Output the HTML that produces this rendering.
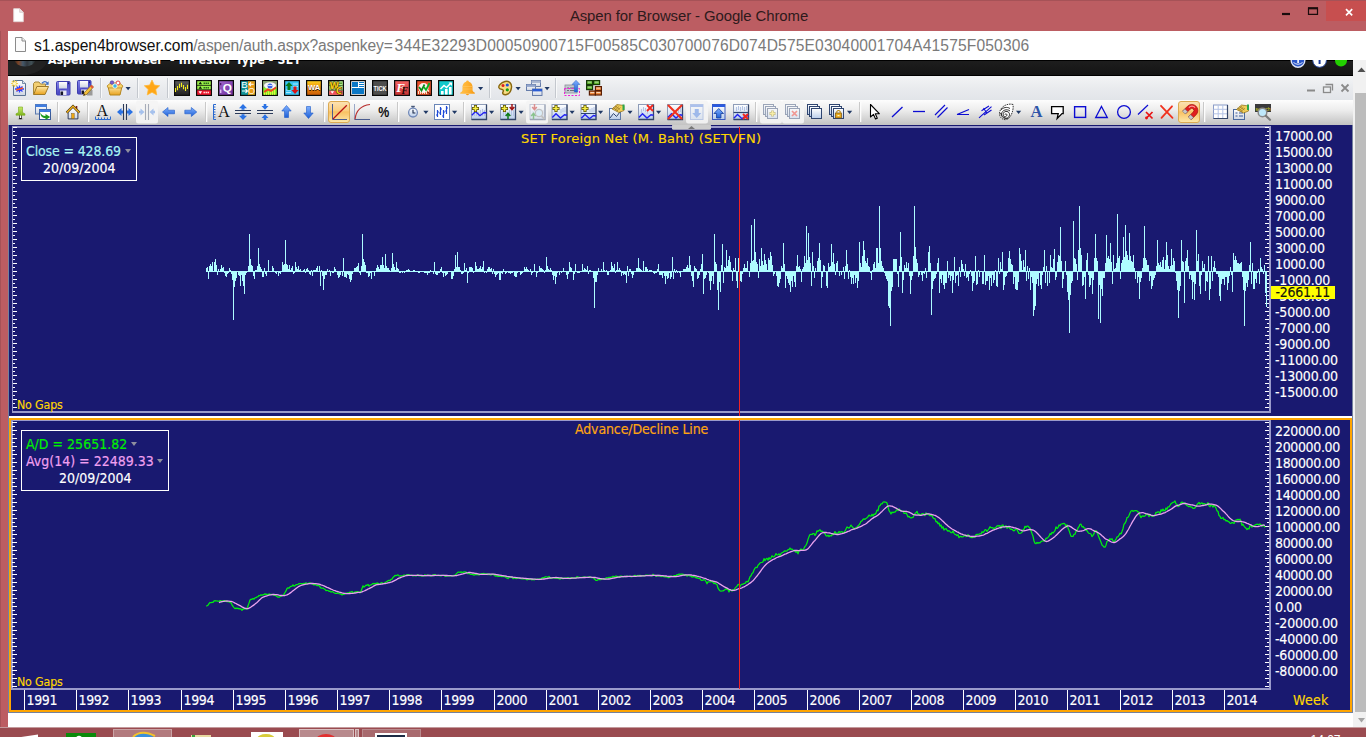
<!DOCTYPE html><html><head><meta charset="utf-8"><title>Aspen for Browser</title><style>
*{box-sizing:border-box}
html,body{margin:0;padding:0}
body{width:1366px;height:737px;overflow:hidden;background:#fff;position:relative;font-family:'Liberation Sans',sans-serif}
.abs{position:absolute}
#title{left:0;top:0;width:1366px;height:31px;background:#bc5d62;border-top:1px solid #a65257}
#title .txt{left:569px;top:7px;width:240px;text-align:center;font-size:14.9px;color:#2e1a1c;white-space:nowrap;letter-spacing:-0.08px}
#lb{left:0;top:31px;width:8px;height:697px;background:#bc5d62;border-left:1px solid #a65257}
#url{left:8px;top:31px;width:1358px;height:29px;background:#fff}
#url .u{top:6px;font-size:15.6px;white-space:nowrap;color:#7a7a7a}
#band{left:8px;top:60px;width:1345px;height:16px;background:linear-gradient(#000 0,#000 1px,#1d1d1d 1.5px,#191919 8px,#151515 14.5px,#000 15px);overflow:hidden}
#band .t{top:-7px;font:bold 12.2px 'DejaVu Sans Condensed','DejaVu Sans','Liberation Sans',sans-serif;color:#fff;white-space:pre;letter-spacing:-0.05px}
#tb1{left:8px;top:76px;width:1345px;height:24px;background:linear-gradient(#f3f4f5,#e9ebee 50%,#e2e5e9)}
#tb2{left:8px;top:100px;width:1345px;height:25px;background:linear-gradient(#fdfdfd,#ececec 42%,#d2d2d2 78%,#c3c3c3)}
#sb{left:1353px;top:60px;width:13px;height:668px;background:#f1f1f1}
#sb .th{left:2px;top:33px;width:11px;height:619px;background:#bcbcbc}
#chart{left:9px;top:125px;width:1343px;height:587px;background:#191970}
#task{left:0;top:727px;width:1366px;height:10px;background:#9a4b50;border-top:1px solid #c39a9c}
.lbl{position:absolute;font:14px 'DejaVu Sans Condensed','DejaVu Sans','Liberation Sans',sans-serif;color:#fff;white-space:nowrap;line-height:16px;height:16px;-webkit-text-stroke:0.15px}
.yl{left:1266px;letter-spacing:-0.36px}
.yr{letter-spacing:-0.36px}
.box{position:absolute;border:1px solid #fff;background:#191970}
.box div{position:absolute;white-space:nowrap;font:14px 'DejaVu Sans Condensed','DejaVu Sans','Liberation Sans',sans-serif;line-height:16px;-webkit-text-stroke:0.15px}
.tri{position:absolute;width:0;height:0;border-left:3px solid transparent;border-right:3px solid transparent;border-top:4px solid #8f8f9f}
</style></head><body><div id="title" class="abs"><div class="abs txt" id="titlet">Aspen for Browser - Google Chrome</div><svg class="abs" style="left:13px;top:7px" width="12" height="15" viewBox="0 0 12 15"><path d="M.7 .7h6l3.600 3.600v9.400h-9.600z" fill="#fff" stroke="#e3d6d6" stroke-width=".9"/><path d="M6.700 .7v3.600h3.600" fill="#ece4e4" stroke="#d4c6c6" stroke-width=".8"/></svg><div class="abs" style="left:1326px;top:0;width:40px;height:20px;background:#c74f4f"></div><svg class="abs" style="left:1270px;top:0" width="96" height="24" viewBox="0 0 96 24"><path d="M12 13h8" stroke="#1a0c0d" stroke-width="2.2"/><path d="M38.500 7.100h9v6.300h-9z" fill="none" stroke="#1a0c0d" stroke-width="1.200"/><path d="M38 7.300h10" stroke="#1a0c0d" stroke-width="2.100"/><path d="M76 8.200l6.200 6.200m0-6.200l-6.200 6.200" stroke="#fff" stroke-width="1.700" fill="none"/></svg></div><div id="lb" class="abs"></div><div id="url" class="abs"><svg class="abs" style="left:7px;top:6px" width="12" height="15" viewBox="0 0 12 15"><path d="M.5 .5h6.5l3.5 3.5v10.5h-10z" fill="#fbfbfb" stroke="#8b8b8b" stroke-width="1"/><path d="M7 .5v3.5h3.5" fill="#eee" stroke="#8b8b8b" stroke-width="1"/></svg><div class="abs u" style="left:26px;color:#111;letter-spacing:-0.05px" id="u1">s1.aspen4browser.com</div><div class="abs u" style="left:185.2px;letter-spacing:-0.15px" id="u2">/aspen/auth.aspx?aspenkey=</div><div class="abs u" style="left:386.6px;letter-spacing:0.15px" id="u3">344E32293D00050900715F00585C030700076D074D575E03040001704A41575F050306</div></div><div id="band" class="abs"><svg class="abs" style="left:0;top:0" width="1345" height="16" viewBox="0 1 1345 16"><defs><linearGradient id="lg" x1="0" y1="0" x2="1" y2="0"><stop offset="0" stop-color="#3a2a20"/><stop offset=".18" stop-color="#b85a28"/><stop offset=".4" stop-color="#5a7a98"/><stop offset=".6" stop-color="#3a4450"/><stop offset=".8" stop-color="#56707a"/><stop offset="1" stop-color="#20262a"/></linearGradient></defs><path d="M0 1h40q-4 12-22 15h-18z" fill="#222"/><ellipse cx="17" cy="1" rx="10.500" ry="6.500" fill="url(#lg)" opacity=".6"/><rect x="0" y="1" width="60" height="1" fill="#000"/><circle cx="1290" cy="1.500" r="6.800" fill="#2a55c8" stroke="#dfe6f8" stroke-width="1.400"/><path d="M1285.500 3.500q4.500 3.500 9 0" stroke="#dfe6f8" stroke-width="1" fill="none"/><rect x="1289.300" y="0" width="1.600" height="4" fill="#fff"/><circle cx="1311.600" cy="1.500" r="6.800" fill="#fff" stroke="#2a4aa0" stroke-width="1"/><rect x="1310.600" y="0" width="2" height="5" fill="#1c3a9a"/><circle cx="1333" cy="1.500" r="6" fill="#22d000"/></svg><div class="abs t" id="bandt" style="left:40px;letter-spacing:0.03px">Aspen for Browser</div><div class="abs t" id="bandt2" style="left:162px;letter-spacing:0.2px">- Investor Type - SET</div></div><div id="tb1" class="abs"></div><div id="tb2" class="abs"></div><svg class="abs" style="left:8px;top:76px" width="1345" height="49" viewBox="8 76 1345 49"><defs>
<linearGradient id="gY" x1="0" y1="0" x2="0" y2="1"><stop offset="0" stop-color="#fde9a8"/><stop offset="1" stop-color="#e9a21e"/></linearGradient>
<linearGradient id="gB" x1="0" y1="0" x2="1" y2="1"><stop offset="0" stop-color="#8c8cec"/><stop offset=".5" stop-color="#4a49c4"/><stop offset="1" stop-color="#6c6cd8"/></linearGradient>
<linearGradient id="gW" x1="0" y1="0" x2="0" y2="1"><stop offset="0" stop-color="#fff"/><stop offset="1" stop-color="#cfd6e2"/></linearGradient>
<linearGradient id="gBl" x1="0" y1="0" x2="0" y2="1"><stop offset="0" stop-color="#7fb0ff"/><stop offset="1" stop-color="#1d5fd6"/></linearGradient>
<linearGradient id="gO" x1="0" y1="0" x2="0" y2="1"><stop offset="0" stop-color="#fce2b4"/><stop offset=".42" stop-color="#fbcf82"/><stop offset=".5" stop-color="#f9c163"/><stop offset="1" stop-color="#fce9ac"/></linearGradient>
<linearGradient id="gG" x1="0" y1="0" x2="0" y2="1"><stop offset="0" stop-color="#c8ec6a"/><stop offset="1" stop-color="#7fb51c"/></linearGradient>
<linearGradient id="gCh" x1="0" y1="0" x2="0" y2="1"><stop offset="0" stop-color="#ffffff"/><stop offset="1" stop-color="#b9cdea"/></linearGradient>
<linearGradient id="gBell" x1="0" y1="0" x2="1" y2="0"><stop offset="0" stop-color="#ffc04a"/><stop offset=".5" stop-color="#ffb232"/><stop offset="1" stop-color="#f59a14"/></linearGradient>
<linearGradient id="gWA" x1="0" y1="0" x2="0" y2="1"><stop offset="0" stop-color="#ffd21e"/><stop offset=".5" stop-color="#e88a10"/><stop offset="1" stop-color="#c85a08"/></linearGradient>
<linearGradient id="gDk" x1="0" y1="0" x2="0" y2="1"><stop offset="0" stop-color="#5c5c5c"/><stop offset="1" stop-color="#1e1e1e"/></linearGradient><linearGradient id="gPu" x1="0" y1="0" x2="1" y2="1"><stop offset="0" stop-color="#a468d0"/><stop offset="1" stop-color="#6a2c98"/></linearGradient><linearGradient id="gRd" x1="0" y1="0" x2="0" y2="1"><stop offset="0" stop-color="#f26464"/><stop offset="1" stop-color="#c63030"/></linearGradient></defs><g transform="translate(11 80)"><path d="M2.500 .500h9l3 3v12h-12z" fill="url(#gW)" stroke="#5b7394"/><path d="M11.500 .500v3h3" fill="#dfe6f0" stroke="#5b7394" stroke-width=".8"/><path d="M4 9h9M8.500 5.500v7M5.500 6.500l6 5M11.500 6.500l-6 5" stroke="#2d3cff" stroke-width="1.300"/><path d="M5 10l7-2" stroke="#ff5a1e" stroke-width="1.600"/><path d="M0 3.500h7M3.500 0v7M1 1l5 5M6 1l-5 5" stroke="#f3cf4a" stroke-width="1.100"/><circle cx="3.500" cy="3.500" r="1.600" fill="#fff6c8"/></g><g transform="translate(33 80)"><path d="M.500 14.500v-11l1.500-1.500h4l1.500 2h5v2.500" fill="#f3cf72" stroke="#a8883c"/><path d="M.700 14.500l3.200-8h11.600l-3.500 8z" fill="url(#gY)" stroke="#a07a28"/><path d="M9 3.200q3-3.200 5.500 0" stroke="#3c6ec4" stroke-width="1.300" fill="none"/><path d="M15.600 1.200v3.600h-3.400z" fill="#3c6ec4"/></g><g transform="translate(56 81)"><rect x=".5" y=".5" width="13.500" height="13.500" rx="1" fill="url(#gB)" stroke="#3f3fae"/><rect x="3" y="1" width="8" height="6.500" fill="url(#gW)"/><rect x="4" y="9.500" width="6.500" height="4.500" fill="#e8e8f4"/><rect x="4.500" y="10.500" width="2.600" height="3.500" fill="#15152a"/><rect x="12" y="1.500" width="1" height="1.600" fill="#22226a"/></g><g transform="translate(77 80)"><rect x=".5" y=".5" width="13.500" height="13.500" rx="1" fill="url(#gB)" stroke="#3f3fae"/><rect x="3" y="1" width="8" height="6.500" fill="url(#gW)"/><rect x="4" y="9.500" width="6.500" height="4.500" fill="#e8e8f4"/><rect x="4.500" y="10.500" width="2.600" height="3.500" fill="#15152a"/><rect x="12" y="1.500" width="1" height="1.600" fill="#22226a"/><rect x="10" y="10" width="5.500" height="5.500" fill="#9a9a9a"/><path d="M14.500 5l2 2l-7 7.500l-3 1l1-3z" fill="#f6c23c" stroke="#8a6414" stroke-width=".7"/><path d="M14.500 5l2 2l-1.300 1.400l-2-2z" fill="#e8503a"/><path d="M6.500 15.500l.6-1.600l1.100 1.100z" fill="#111"/></g><rect x="100" y="78" width="1" height="20" fill="#c4c8ce"/><rect x="101" y="78" width="1" height="20" fill="#f8f9fa"/><g transform="translate(107 80)"><path d="M1 6.500h14l-2 8.500h-10z" fill="url(#gY)" stroke="#b4861e"/><path d="M0 6l3.500-3h9l3.500 3l-1.500 2h-13z" fill="#f7d36a" stroke="#b4861e" stroke-width=".8"/><circle cx="5" cy="2.600" r="1.800" fill="#7a5ad0" stroke="#4a3a9a" stroke-width=".6"/><circle cx="11" cy="3" r="2" fill="#fff" stroke="#e04040" stroke-width="1"/><circle cx="8" cy="6" r="2.200" fill="#39b6e8" stroke="#fff" stroke-width=".8"/></g><path d="M125.5 87h5.200l-2.600 3.300z" fill="#1f3864"/><rect x="137" y="78" width="1" height="20" fill="#c4c8ce"/><rect x="138" y="78" width="1" height="20" fill="#f8f9fa"/><g transform="translate(144 79.5)"><path d="M8 .600l2.350 5l5.300.650l-3.900 3.750l1 5.400l-4.750-2.650l-4.750 2.650l1-5.400l-3.900-3.750l5.300-.650z" fill="#ffa616" stroke="#ffba3c" stroke-width=".8" stroke-linejoin="round"/></g><rect x="167" y="78" width="1" height="20" fill="#c4c8ce"/><rect x="168" y="78" width="1" height="20" fill="#f8f9fa"/><g transform="translate(174 80)"><rect x=".6" y=".6" width="14.800" height="14.800" fill="url(#gDk)" stroke="#0a0a0a" stroke-width="1.200"/><path d="M1.500 8v4M3.500 6v4.200M5.500 3.800v4.200M7.500 2.800v4.200M9.500 4.900v4.300M11.500 6.900v4.200M13.500 4.800v4.200" stroke="#f4ee1e" stroke-width="1.100"/></g><g transform="translate(196 80)"><rect x=".6" y=".6" width="14.800" height="14.800" fill="#111" stroke="#0a0a0a" stroke-width="1.200"/><rect x="1.200" y="1.200" width="13.600" height="3.700" fill="#98f048"/><rect x="1.200" y="5.700" width="13.600" height="3.700" fill="#98f048"/><rect x="1.200" y="10.300" width="13.600" height="4.500" fill="#f01830"/><path d="M2.500 4.300l1.800-2.500l1.800 2.500zM2.500 8.800l1.800-2.500l1.800 2.500z" fill="#0a1a0a"/><path d="M2.500 11.300l1.800 2.600l1.800-2.600z" fill="#fff"/><path d="M7.500 3.300h6M7.500 7.800h6" stroke="#2a6a1a" stroke-width="1.500" stroke-dasharray="1.500 .5"/><path d="M7.500 12.600h6" stroke="#ffd8d8" stroke-width="1.500" stroke-dasharray="1.500 .5"/></g><g transform="translate(218 80)"><rect x=".6" y=".6" width="14.800" height="14.800" fill="url(#gPu)" stroke="#0a0a0a" stroke-width="1.200"/><text x="4.800" y="12.300" font-family="Liberation Sans,sans-serif" font-weight="bold" font-size="11.800" fill="#fff">Q</text><rect x="2" y="3" width="1.300" height="2.200" fill="#4a1a6a"/><rect x="2" y="9.600" width="1.400" height="3.400" fill="#e0c4f4"/></g><g transform="translate(240 80)"><rect x=".6" y=".6" width="14.800" height="14.800" fill="#10949a" stroke="#0a0a0a" stroke-width="1.200"/><rect x="8" y="1.200" width="6.800" height="13.600" fill="#e89a14"/><text x="1.300" y="8" font-family="Liberation Sans,sans-serif" font-size="9.500" fill="#fff">B</text><text x="8" y="14.400" font-family="Liberation Sans,sans-serif" font-size="9" fill="#fff4dc">O</text><path d="M13.700 4.300h-4.700m2-1.900l-2 1.900l2 1.900" stroke="#fff" stroke-width="1.100" fill="none"/><path d="M2 11h5.500m-2-1.900l2 1.900l-2 1.900" stroke="#fff" stroke-width="1.100" fill="none"/></g><g transform="translate(262 80)"><rect x=".6" y=".6" width="14.800" height="14.800" fill="#84ee2a" stroke="#0a0a0a" stroke-width="1.200"/><rect x="1.200" y="1.200" width="13.600" height="6.300" fill="#8c9c80"/><path d="M2.500 14.800v-3M4.500 14.800v-2.500M6.500 14.800v-3.500M8.500 14.800v-3M10.500 14.800v-4.500M12.500 14.800v-6" stroke="#e0f43c" stroke-width="1"/><ellipse cx="8" cy="5.600" rx="6" ry="3.300" fill="#f6f6f6"/><circle cx="8" cy="6" r="2.500" fill="#3a64e8"/><path d="M5.700 5.500h4.600" stroke="#dce6ff" stroke-width=".9"/><path d="M2.200 12l3.800-2.600l3 1.600l5-3.600" stroke="#f0401e" stroke-width="1.900" fill="none"/></g><g transform="translate(284 80)"><rect x=".6" y=".6" width="14.800" height="14.800" fill="#38c4f4" stroke="#0a0a0a" stroke-width="1.200"/><path d="M9 4h5M9 6.500h5M2 10h5M2 12.500h5" stroke="#a8e8ff" stroke-width="1.200"/><path d="M5 2l3.700 4h-2.200v4h-3v-4h-2.200z" fill="#0a7a1a"/><path d="M11 14l-3.700-4h2.200v-3.500h3v3.500h2.200z" fill="#d81414"/></g><g transform="translate(306 80)"><rect x=".6" y=".6" width="14.800" height="14.800" fill="url(#gWA)" stroke="#0a0a0a" stroke-width="1.200"/><text x="2" y="11" font-family="Liberation Sans,sans-serif" font-weight="bold" font-size="7.500" fill="#3a1a00" textLength="12.300" lengthAdjust="spacingAndGlyphs">WA</text><text x="2" y="10.200" font-family="Liberation Sans,sans-serif" font-weight="bold" font-size="7.500" fill="#fff" textLength="12.300" lengthAdjust="spacingAndGlyphs">WA</text></g><g transform="translate(328 80)"><rect x=".6" y=".6" width="14.800" height="14.800" fill="#b4ec8c" stroke="#0a0a0a" stroke-width="1.200"/><rect x="1.200" y="10.400" width="13.600" height="4.400" fill="#f04c5c"/><path d="M1.200 5.500h13.600M1.200 10.200h13.600" stroke="#3a5a2a" stroke-width=".8"/><path d="M9 3.300h5M9 7.800h5" stroke="#5a9a3a" stroke-width="1.400"/><path d="M2.500 11.300l1.800 2.400l1.800-2.400z" fill="#fff"/><text x="1.600" y="8.600" font-family="DejaVu Sans,Liberation Sans,sans-serif" font-weight="bold" font-size="8.600" fill="#f4cc14" stroke="#3a2800" stroke-width="1" paint-order="stroke">W</text><text x="8" y="14" font-family="DejaVu Sans,Liberation Sans,sans-serif" font-weight="bold" font-size="8" fill="#f4cc14" stroke="#3a2800" stroke-width="1" paint-order="stroke">C</text></g><g transform="translate(350 80)"><rect x=".6" y=".6" width="14.800" height="14.800" fill="#ffffff" stroke="#0a0a0a" stroke-width="1.200"/><g shape-rendering="crispEdges" fill="#0c78c6"><rect x="2" y="2" width="6" height="5"/><rect x="9" y="2" width="5" height="1"/><rect x="9" y="4" width="5" height="1"/><rect x="9" y="6" width="5" height="1"/><rect x="2" y="8" width="12" height="6"/></g></g><g transform="translate(372 80)"><rect x=".6" y=".6" width="14.800" height="14.800" fill="#4e4e4e" stroke="#0a0a0a" stroke-width="1.200"/><text x="1.500" y="10.600" font-family="Liberation Sans,sans-serif" font-weight="bold" font-size="7" fill="#ffffff" textLength="13" lengthAdjust="spacingAndGlyphs">TICK</text></g><g transform="translate(394 80)"><rect x=".6" y=".6" width="14.800" height="14.800" fill="url(#gRd)" stroke="#0a0a0a" stroke-width="1.200"/><text x="2.300" y="11.600" font-family="Liberation Serif,serif" font-style="italic" font-weight="bold" font-size="13" fill="#fff">F</text><text x="7.600" y="13.800" font-family="Liberation Serif,serif" font-style="italic" font-weight="bold" font-size="9.500" fill="#1a0606">F</text></g><g transform="translate(416 80)"><rect x=".6" y=".6" width="14.800" height="14.800" fill="#e8502a" stroke="#0a0a0a" stroke-width="1.200"/><path d="M2.500 14v-3M4.500 14v-4M6.500 14v-2M8.500 14v-4M10.500 14v-3M12.500 14v-4" stroke="#ffe0c0" stroke-width="1"/><circle cx="7.500" cy="8" r="5" fill="#fff" opacity=".92"/><path d="M3 7l2.500 3.500l3-6" stroke="#0a8a1a" stroke-width="1.700" fill="none"/><path d="M8 7l2 3l3.500-7" stroke="#0ab01e" stroke-width="1.700" fill="none"/><path d="M11.500 12l3 2.500" stroke="#7a1a0a" stroke-width="1.500"/></g><g transform="translate(438 80)"><rect x=".6" y=".6" width="14.800" height="14.800" fill="#12c8cc" stroke="#0a0a0a" stroke-width="1.200"/><rect x="3" y="11" width="2.600" height="3.500" fill="#fff"/><rect x="7" y="9" width="2.600" height="5.500" fill="#fff"/><rect x="11" y="7" width="2.600" height="7.500" fill="#fff"/><path d="M2.500 9l3.500-3.500l2.500 2l4.500-4.500" stroke="#fff" stroke-width="1.500" fill="none"/><path d="M10.500 2.500h3.500v3.500z" fill="#fff"/></g><g transform="translate(460 80)"><path d="M7.500 .500q1.200 0 1.400 1.200q3.600 1.300 3.600 5.300v3.300q0 1.300 2.300 2.400v1.100h-14.600v-1.100q2.300-1.100 2.300-2.400v-3.300q0-4 3.600-5.300q.200-1.200 1.400-1.200z" fill="url(#gBell)"/><path d="M2.500 6.500h10M2.500 9h10" stroke="#ffca6a" stroke-width=".8" opacity=".7"/><path d="M5.800 14q1.700 2.400 3.400 0z" fill="#f59a14"/></g><path d="M478 87h5.200l-2.600 3.300z" fill="#1f3864"/><rect x="489" y="78" width="1" height="20" fill="#c4c8ce"/><rect x="490" y="78" width="1" height="20" fill="#f8f9fa"/><g transform="translate(498 80)"><path d="M7 1.500c4-1 7 2 6.500 6c-.300 3-1.500 6-5 7c-3 .8-4.500-1-3.500-2.500c1-1.500 0-2.500-1.500-2.700c-3-.5-3.500-2.500-1.500-4.800c1.300-1.500 3-2.500 5-3z" fill="#f7dc82" stroke="#8a6810" stroke-width="1.400"/><circle cx="5" cy="5.500" r="1.500" fill="#e02020"/><circle cx="9.300" cy="5" r="1.600" fill="#2050d8"/><circle cx="9.300" cy="9.800" r="1.600" fill="#18a018"/></g><path d="M515.5 87h5.200l-2.600 3.300z" fill="#1f3864"/><g transform="translate(526 80)"><rect x="5.5" y="0.5" width="9" height="6" fill="url(#gW)" stroke="#5a72a4" stroke-width=".9"/><rect x="5.5" y="0.5" width="9" height="2.400" fill="#a9b6d0"/><rect x="0.5" y="4.5" width="9" height="6" fill="url(#gW)" stroke="#5a72a4" stroke-width=".9"/><rect x="0.5" y="4.5" width="9" height="2.400" fill="#93a6cc"/><rect x="6.5" y="9" width="9.5" height="6.5" fill="url(#gW)" stroke="#5a72a4" stroke-width=".9"/><rect x="6.5" y="9" width="9.5" height="2.400" fill="#2a5cd4"/></g><path d="M544.5 87h5.200l-2.600 3.300z" fill="#1f3864"/><rect x="555" y="78" width="1" height="20" fill="#c4c8ce"/><rect x="556" y="78" width="1" height="20" fill="#f8f9fa"/><g transform="translate(564 80)"><rect x="1" y="5" width="12" height="8" fill="#c4c8d0" stroke="#8a8e98" stroke-width=".8"/><path d="M3 8h2M3 10.500h2M6 8h5M6 10.500h5" stroke="#6a6e78" stroke-width="1"/><rect x=".5" y="8.500" width="15" height="7" fill="none" stroke="#f020d8" stroke-width="1" stroke-dasharray="2 1.500"/><path d="M12 .300l4 4.200h-2.300v7.500h-3.400v-7.500h-2.300z" fill="url(#gBl)" stroke="#2a64c0" stroke-width=".5"/></g><g transform="translate(586 80)"><rect x="0.6" y="0.6" width="6" height="4" fill="#5ab428" stroke="#163a08" stroke-width="1.200"/><path d="M1.6 2.1h4" stroke="#fff" stroke-width=".8" opacity=".8"/><rect x="7.6" y="0.6" width="6" height="4" fill="#5ab428" stroke="#163a08" stroke-width="1.200"/><path d="M8.6 2.1h4" stroke="#fff" stroke-width=".8" opacity=".8"/><rect x="0.6" y="5.6" width="6" height="4" fill="#5ab428" stroke="#163a08" stroke-width="1.200"/><path d="M1.6 7.1h4" stroke="#fff" stroke-width=".8" opacity=".8"/><rect x="9.4" y="6.6" width="6" height="4" fill="#f08a3c" stroke="#5a1e04" stroke-width="1.200"/><path d="M10.4 8.1h4" stroke="#fff" stroke-width=".8" opacity=".8"/><rect x="3.4" y="11" width="6" height="4" fill="#f08a3c" stroke="#5a1e04" stroke-width="1.200"/><path d="M4.4 12.5h4" stroke="#fff" stroke-width=".8" opacity=".8"/><rect x="9.4" y="11" width="6" height="4" fill="#f08a3c" stroke="#5a1e04" stroke-width="1.200"/><path d="M10.4 12.5h4" stroke="#fff" stroke-width=".8" opacity=".8"/></g><path d="M1307 90.500h8" stroke="#8a8a8a" stroke-width="2"/><path d="M1325.500 84.500h7v6" stroke="#8a8a8a" stroke-width="1.300" fill="none"/><rect x="1323.500" y="87" width="7" height="5.500" fill="#eceef0" stroke="#8a8a8a" stroke-width="1.300"/><path d="M1341.500 84.500l7 7m0-7l-7 7" stroke="#8a8a8a" stroke-width="1.800"/><g transform="translate(13 104)"><ellipse cx="7.500" cy="15" rx="3" ry="1" fill="#999" opacity=".5"/><rect x="6.500" y="10.500" width="2" height="4" fill="#fff" stroke="#222" stroke-width=".7"/><rect x="6.300" y="14" width="2.400" height="1.200" fill="#111"/><path d="M5.500 3h4v5.500l2.500 1.300v1.400h-9v-1.400l2.500-1.300z" fill="url(#gG)" stroke="#7aa81c" stroke-width=".6"/></g><g transform="translate(35 104)"><rect x=".5" y=".5" width="11" height="9.500" fill="url(#gW)" stroke="#5a7ab0"/><rect x=".5" y=".5" width="11" height="2.500" fill="#3f7ce0"/><rect x="4.500" y="5.500" width="11" height="10" fill="#fff" stroke="#3a5a98"/><rect x="4.500" y="5.500" width="11" height="2.500" fill="#3f7ce0"/><path d="M5.200 8.300q1.300 3.600 5.300 3.600v-2l4.700 3.200l-4.700 3v-1.900q-5 0-5.300-5.900z" fill="#1e9a1e"/></g><rect x="57" y="102" width="1" height="20" fill="#c9c9c9"/><rect x="58" y="102" width="1.300" height="20" fill="#fdfdfd"/><g transform="translate(65 104)"><g transform="translate(.9 1.100) scale(.89)"><rect x="11" y="1" width="1.800" height="4" fill="#7a1e1e"/><path d="M2.500 8v7.500h11v-7.500l-5.500-5.500z" fill="url(#gW)" stroke="#1e2a4a" stroke-width="1"/><path d="M.800 8.500l7.200-7.200l7.200 7.200" fill="none" stroke="#3a2a0a" stroke-width="2.600"/><path d="M1 8.300l7-7l7 7" fill="none" stroke="#f4b41e" stroke-width="1.500"/><rect x="6.500" y="9.500" width="2.800" height="5.500" fill="#f0aa14" stroke="#7a5208" stroke-width=".5"/></g></g><rect x="87" y="102" width="1" height="20" fill="#c9c9c9"/><rect x="88" y="102" width="1.300" height="20" fill="#fdfdfd"/><g transform="translate(95 104)"><text x="1.500" y="11.500" font-family="Liberation Serif,serif" font-size="16" fill="#111">A</text><path d="M.500 12.500v3h15v-3M3.500 13.500v2M6.500 13.500v2M9.500 13.500v2M12.500 13.500v2" stroke="#2a6ad0" stroke-width="1" fill="none"/></g><g transform="translate(117 104)"><g opacity="1"><path d="M6.500 0v16M9.500 0v16" stroke="#2a3a5a" stroke-width="1.100"/><path d="M0 8l4.500-4v2.500h1.500v3h-1.500v2.500z" fill="#2a72e4"/><path d="M16 8l-4.500-4v2.500h-1.500v3h1.500v2.500z" fill="#2a72e4"/></g></g><rect x="136" y="100.500" width="22" height="23" rx="2.500" fill="#f4f4f4" opacity=".92"/><g transform="translate(139 104)"><g opacity=".38"><path d="M6.500 0v16M9.500 0v16" stroke="#2a3a5a" stroke-width="1.100"/><path d="M5.500 8l-4-3.500v2.300h-1.500v2.400h1.500v2.300z" fill="#2a72e4"/><path d="M10.500 8l4-3.500v2.300h1.500v2.400h-1.500v2.300z" fill="#2a72e4"/></g></g><g transform="translate(162 104)"><path d="M.500 8l5.500-4.500v2.700h6.500v3.600h-6.500v2.700z" fill="url(#gBl)" stroke="#1e5ac8" stroke-width=".6"/></g><g transform="translate(184 104)"><path d="M12.800 8l-5.500-4.500v2.700h-6.500v3.600h6.500v2.700z" fill="url(#gBl)" stroke="#1e5ac8" stroke-width=".6"/></g><rect x="205" y="102" width="1" height="20" fill="#c9c9c9"/><rect x="206" y="102" width="1.300" height="20" fill="#fdfdfd"/><g transform="translate(212 104)"><path d="M4 .500h-2.500v15h2.500M1.500 3h2M1.500 5.500h2M1.500 8h2M1.500 10.500h2M1.500 13h2" stroke="#2a6ad0" stroke-width="1" fill="none"/><text x="6" y="13.300" font-family="Liberation Serif,serif" font-size="16.500" fill="#111">A</text></g><g transform="translate(235 104)"><path d="M0 6.500h16M0 9.500h16" stroke="#2a3a5a" stroke-width="1.100"/><path d="M8 0l4 4.200h-2.500v1.500h-3v-1.500h-2.500z" fill="#2a72e4"/><path d="M8 16l4-4.200h-2.500v-1.500h-3v1.500h-2.500z" fill="#2a72e4"/></g><g transform="translate(257 104)"><path d="M0 6.500h16M0 9.500h16" stroke="#2a3a5a" stroke-width="1.100"/><path d="M8 5.700l3.500-3.700h-2.200v-2h-2.600v2h-2.200z" fill="#2a72e4"/><path d="M8 10.300l3.500 3.700h-2.200v2h-2.600v-2h-2.200z" fill="#2a72e4"/></g><g transform="translate(279 104)"><path d="M7.500 1.500l4.700 5.500h-2.700v6.500h-4v-6.500h-2.700z" fill="url(#gBl)" stroke="#1e5ac8" stroke-width=".6"/></g><g transform="translate(301 104)"><path d="M7.500 14.500l4.700-5.500h-2.700v-6.500h-4v6.500h-2.700z" fill="url(#gBl)" stroke="#1e5ac8" stroke-width=".6"/></g><rect x="323" y="102" width="1" height="20" fill="#c9c9c9"/><rect x="324" y="102" width="1.300" height="20" fill="#fdfdfd"/><rect x="328.5" y="101.500" width="21" height="21" rx="2.500" fill="url(#gO)" stroke="#dcaa52"/><g transform="translate(331 104)"><path d="M1.500 0v15.500h14.500" stroke="#4a5c90" stroke-width="1" fill="none"/><path d="M2 15l13.800-13.800" stroke="#b81414" stroke-width="1.250"/></g><g transform="translate(354 104)"><path d="M.500 0v15.500" stroke="#9aa8c8" stroke-width="1" fill="none"/><path d="M.500 15.500h15.500" stroke="#4a5c90" stroke-width="1" fill="none"/><path d="M1 15.200q1.500-13 15-14.700" stroke="#b83030" stroke-width="1.250" fill="none"/></g><text x="378.300" y="117.300" font-family="Liberation Sans,sans-serif" font-weight="bold" font-size="14" fill="#111" textLength="11" lengthAdjust="spacingAndGlyphs">%</text><rect x="397" y="102" width="1" height="20" fill="#c9c9c9"/><rect x="398" y="102" width="1.300" height="20" fill="#fdfdfd"/><g transform="translate(405 104)"><rect x="6.200" y="1.800" width="3.600" height="1.300" fill="#4a5a7a"/><rect x="7.400" y="2.800" width="1.200" height="1.400" fill="#4a5a7a"/><circle cx="8" cy="8.600" r="4.400" fill="url(#gCh)" stroke="#7088b8" stroke-width="1.300"/><path d="M8 5.800v3.200h2.400" stroke="#1a2a4a" stroke-width="1.100" fill="none"/></g><path d="M423.3 110.7h5.200l-2.600 3.300z" fill="#1f3864"/><g transform="translate(434 104)"><rect x=".5" y=".5" width="15" height="15" fill="#fff" stroke="#6a86b8"/><path d="M3.500 6v7M6.500 3v8M9.500 6v8M12.500 2v8" stroke="#1c4ad8" stroke-width="1.200"/><path d="M2 11h1.500M3.500 8h1.500M5 9h1.500M6.500 5h1.500M8 12h1.500M9.500 8h1.500M11 7h1.500M12.500 4h1.500" stroke="#1c4ad8" stroke-width="1"/></g><path d="M452 110.7h5.200l-2.600 3.300z" fill="#1f3864"/><rect x="463" y="102" width="1" height="20" fill="#c9c9c9"/><rect x="464" y="102" width="1.300" height="20" fill="#fdfdfd"/><g transform="translate(471 104)"><g opacity="1"><rect x=".5" y=".5" width="15" height="15" fill="url(#gCh)" stroke="#8e9cb8"/><path d="M.500 15.500h15v-15" fill="none" stroke="#34466a" stroke-width="1.300"/><path d="M3.500 7v5M5.500 6v6M7.500 8v5M9.500 6v6M11.500 5v7M13.500 6v6" stroke="#b4c4e4" stroke-width="1"/><path transform="translate(0 0)" d="M.8 11.200l3.700-3.700l4.500 4.200l4-3.200l2.500 .5" stroke="#2222f0" stroke-width="1.400" fill="none"/><g transform="translate(0 0)"><path d="M1 4.500h7M4.500 1v7" stroke="#5a5200" stroke-width="3.100"/><path d="M1.700 4.500h5.600M4.500 1.700v5.600" stroke="#f8f048" stroke-width="1.600"/></g></g></g><path d="M489 110.7h5.200l-2.600 3.300z" fill="#1f3864"/><g transform="translate(500 104)"><g opacity="1"><rect x=".5" y=".5" width="15" height="15" fill="url(#gCh)" stroke="#8e9cb8"/><path d="M.500 15.500h15v-15" fill="none" stroke="#34466a" stroke-width="1.300"/><path d="M3.500 7v5M5.500 6v6M7.500 8v5M9.500 6v6M11.500 5v7M13.500 6v6" stroke="#b4c4e4" stroke-width="1"/><g transform="translate(0 0)"><path d="M1 4.500h7M4.500 1v7" stroke="#5a5200" stroke-width="3.100"/><path d="M1.700 4.500h5.600M4.500 1.700v5.600" stroke="#f8f048" stroke-width="1.600"/></g><path d="M12 0v5m-2.300-2l2.300 2.700l2.300-2.700" stroke="#a01414" stroke-width="1.500" fill="none"/><path d="M8 15v-5m-2.300 2l2.300-2.700l2.300 2.700" stroke="#0a7a14" stroke-width="1.500" fill="none"/></g></g><path d="M518.5 110.7h5.200l-2.600 3.300z" fill="#1f3864"/><rect x="526" y="100.500" width="22" height="23" rx="2.500" fill="#f4f4f4" opacity=".92"/><g transform="translate(529.5 104)"><g opacity=".45"><g opacity="1"><rect x=".5" y=".5" width="15" height="15" fill="url(#gCh)" stroke="#8e9cb8"/><path d="M.500 15.500h15v-15" fill="none" stroke="#34466a" stroke-width="1.300"/><path d="M3.500 7v5M5.500 6v6M7.500 8v5M9.500 6v6M11.500 5v7M13.500 6v6" stroke="#b4c4e4" stroke-width="1"/><path d="M5 0v5m-2.300-2l2.300 2.700l2.300-2.700" stroke="#c01414" stroke-width="1.500" fill="none"/><path d="M4 15v-5m-2.300 2l2.300-2.700l2.300 2.700" stroke="#0a8a14" stroke-width="1.500" fill="none"/><circle cx="9.500" cy="9" r="3.600" fill="#bfe4fa" stroke="#888" stroke-width="1.200"/><path d="M12 12l3 3" stroke="#888" stroke-width="1.800"/></g></g></g><g transform="translate(551.5 104)"><g opacity="1"><rect x=".5" y=".5" width="15" height="15" fill="url(#gCh)" stroke="#8e9cb8"/><path d="M.500 15.500h15v-15" fill="none" stroke="#34466a" stroke-width="1.300"/><path d="M9.500 5v4M11.500 4v4M13.500 3v5" stroke="#b4c4e4" stroke-width="1"/><path transform="translate(0 2.3)" d="M.8 11.200l3.700-3.700l4.500 4.200l4-3.200l2.500 .5" stroke="#2222f0" stroke-width="1.400" fill="none"/><g transform="translate(0 0)"><path d="M1 4.500h7M4.500 1v7" stroke="#5a5200" stroke-width="3.100"/><path d="M1.700 4.500h5.600M4.500 1.700v5.600" stroke="#f8f048" stroke-width="1.600"/></g></g></g><path d="M569.5 110.7h5.200l-2.600 3.300z" fill="#1f3864"/><g transform="translate(580.5 104)"><g opacity="1"><rect x=".5" y=".5" width="15" height="15" fill="url(#gCh)" stroke="#8e9cb8"/><path d="M.500 15.500h15v-15" fill="none" stroke="#34466a" stroke-width="1.300"/><path d="M9.500 5v3M11.500 4v4M13.500 3v5" stroke="#b4c4e4" stroke-width="1"/><path transform="translate(0 3)" d="M.8 11.200l3.700-3.700l4.500 4.200l4-3.200l2.500 .5" stroke="#2222f0" stroke-width="1.400" fill="none"/><g transform="translate(0 0)"><path d="M1 4.500h7M4.500 1v7" stroke="#5a5200" stroke-width="3.100"/><path d="M1.700 4.500h5.600M4.500 1.700v5.600" stroke="#f8f048" stroke-width="1.600"/></g><path d="M.500 9.500h15" stroke="#2f4570" stroke-width="1"/></g></g><path d="M598 110.7h5.200l-2.600 3.300z" fill="#1f3864"/><g transform="translate(609 104)"><rect x=".5" y="4.500" width="11" height="11" fill="url(#gCh)" stroke="#5e7aa6"/><path d="M1 14l3.500-4.500l3 3l3.500-4.500" stroke="#2f4570" stroke-width="1" fill="none"/><path d="M3 5l5-4.500l7 1v5l-5 2z" fill="#f2cf5a" stroke="#8a6a14" stroke-width=".7"/><path d="M4.500 5l4-3.500M6 6l4-3.500M7.500 7l4-3.500M4 3.500l5 3.500M6 2l5 3.500" stroke="#7a5a14" stroke-width=".5"/><rect x="13.500" y=".5" width="2" height="5.500" fill="#2aa84a"/></g><path d="M627.4 110.7h5.200l-2.600 3.300z" fill="#1f3864"/><g transform="translate(638 104)"><g opacity="1"><rect x=".5" y=".5" width="15" height="15" fill="url(#gCh)" stroke="#8e9cb8"/><path d="M.500 15.500h15v-15" fill="none" stroke="#34466a" stroke-width="1.300"/><path d="M3.500 5v4M5.500 3v4M7.500 4v4M9.500 7v3" stroke="#b4c4e4" stroke-width="1"/><path transform="translate(0 2.3)" d="M.8 11.200l3.700-3.700l4.500 4.200l4-3.200l2.500 .5" stroke="#2222f0" stroke-width="1.400" fill="none"/><g transform="translate(9 1)"><path d="M0 0l6 6m0-6l-6 6" stroke="#f0281e" stroke-width="1.900"/></g></g></g><path d="M656 110.7h5.200l-2.600 3.300z" fill="#1f3864"/><g transform="translate(667 104)"><g opacity="1"><rect x=".5" y=".5" width="15" height="15" fill="url(#gCh)" stroke="#8e9cb8"/><path d="M.500 15.500h15v-15" fill="none" stroke="#34466a" stroke-width="1.300"/><path d="M11.500 4v5M13.500 3v5" stroke="#b4c4e4" stroke-width="1"/><path transform="translate(0 2.3)" d="M.8 11.200l3.700-3.700l4.500 4.200l4-3.200l2.500 .5" stroke="#2222f0" stroke-width="1.400" fill="none"/><path d="M1.500 1.500l13 13m0-13l-13 13" stroke="#f0321e" stroke-width="2.100" stroke-linecap="round"/></g></g><rect x="686" y="100.500" width="22" height="23" rx="2.500" fill="#f4f4f4" opacity=".92"/><g transform="translate(690 104)"><g opacity=".42"><rect x=".5" y=".5" width="12.500" height="15" fill="url(#gCh)" stroke="#6a8ad0"/><rect x=".5" y=".5" width="12.500" height="2.500" fill="#4a7ae0"/><path d="M6.750 14l4.500-5h-2.500v-4h-4v4h-2.500z" fill="#2a6ae0"/></g></g><g transform="translate(712 104)"><rect x=".5" y=".5" width="12.500" height="15" fill="url(#gCh)" stroke="#3a5ac0"/><rect x=".5" y=".5" width="12.500" height="2.500" fill="#2a5ae0"/><path d="M6.750 4.500l4.800 5h-2.600v4.500h-4.400v-4.500h-2.600z" fill="url(#gBl)" stroke="#143c9a" stroke-width=".8"/></g><g transform="translate(733 104)"><g opacity="1"><rect x=".5" y=".5" width="15" height="15" fill="url(#gCh)" stroke="#8e9cb8"/><path d="M.500 15.500h15v-15" fill="none" stroke="#34466a" stroke-width="1.300"/><path d="M3.500 3v4M5.500 2v4M7.500 3v4M9.500 2v4M11.500 3v4M13.500 2v4" stroke="#b4c4e4" stroke-width="1"/><path transform="translate(0 3)" d="M.8 11.200l3.700-3.700l4.500 4.200l4-3.200l2.500 .5" stroke="#2222f0" stroke-width="1.400" fill="none"/><path d="M.500 8.500h15" stroke="#2f4570" stroke-width="1.200"/><g transform="translate(10 10)"><path d="M0 0l5 5m0-5l-5 5" stroke="#f0281e" stroke-width="1.900"/></g></g></g><rect x="755" y="102" width="1" height="20" fill="#c9c9c9"/><rect x="756" y="102" width="1.300" height="20" fill="#fdfdfd"/><rect x="760" y="100.500" width="22" height="23" rx="2.500" fill="#f4f4f4" opacity=".92"/><rect x="782" y="100.500" width="22" height="23" rx="2.500" fill="#f4f4f4" opacity=".92"/><g transform="translate(763 104)"><g opacity="0.45"><rect x="0.5" y="0.5" width="10" height="10" fill="url(#gCh)" stroke="#2f4570"/><rect x="2.5" y="2.5" width="10" height="10" fill="url(#gCh)" stroke="#2f4570"/><rect x="4.5" y="4.5" width="10" height="10" fill="url(#gCh)" stroke="#2f4570"/><g transform="translate(6.5 6.5)"><path d="M0 3h6M3 0v6" stroke="#8a7a14" stroke-width="2.800"/><path d="M.6 3h4.800M3 .6v4.800" stroke="#ffe84a" stroke-width="1.500"/></g></g></g><g transform="translate(785 104)"><g opacity="0.45"><rect x="0.5" y="0.5" width="10" height="10" fill="url(#gCh)" stroke="#2f4570"/><rect x="2.5" y="2.5" width="10" height="10" fill="url(#gCh)" stroke="#2f4570"/><rect x="4.5" y="4.5" width="10" height="10" fill="url(#gCh)" stroke="#2f4570"/><g transform="translate(7 7)"><path d="M0 0l5 5m0-5l-5 5" stroke="#f0281e" stroke-width="1.700"/></g></g></g><g transform="translate(807 104)"><g opacity="1"><rect x="0.5" y="0.5" width="10" height="10" fill="url(#gCh)" stroke="#2f4570"/><rect x="2.5" y="2.5" width="10" height="10" fill="url(#gCh)" stroke="#2f4570"/><rect x="4.5" y="4.5" width="10" height="10" fill="url(#gCh)" stroke="#2f4570"/></g></g><g transform="translate(829 104)"><g opacity="1"><rect x="0.5" y="0.5" width="10" height="10" fill="url(#gCh)" stroke="#2f4570"/><rect x="2.5" y="2.5" width="10" height="10" fill="url(#gCh)" stroke="#2f4570"/><rect x="4.5" y="4.5" width="10" height="10" fill="url(#gCh)" stroke="#2f4570"/><rect x="6.500" y="9" width="6" height="5" fill="#e8aa1e" stroke="#7a5208" stroke-width=".7"/><path d="M7.800 9v-1.500q1.700-2 3.400 0v1.500" stroke="#b88a1e" stroke-width="1.100" fill="none"/><rect x="8.500" y="11" width="2" height="1.200" fill="#fff3c0"/></g></g><path d="M847 110.7h5.200l-2.600 3.300z" fill="#1f3864"/><rect x="859" y="102" width="1" height="20" fill="#c9c9c9"/><rect x="860" y="102" width="1.300" height="20" fill="#fdfdfd"/><path d="M870.500 104.500v12.500l3-2.600l2 4.600l1.800-.8l-2-4.500h4z" fill="#fff" stroke="#000" stroke-width="1.100" stroke-linejoin="round"/><path d="M892 117l10.500-10" stroke="#0c0cd2" stroke-width="1.300"/><path d="M913 111.500h12" stroke="#0c0cd2" stroke-width="1.300"/><path d="M935 115l10-10M937.500 117.500l10-10" stroke="#0c0cd2" stroke-width="1.200"/><path d="M957 114.500h12M957 114.500l12-5" stroke="#0c0cd2" stroke-width="1.200"/><path d="M979 117.800l12.500-11.200M981.500 110.700l7.500-4.700M984 115l7.500-5M983.500 108l3.500 5.500" stroke="#0c0cd2" stroke-width="1.100"/><path d="M1013 104.500c-5-1.500-12 1.500-13.300 7.500c-1 5 3 8.500 6.800 7.500c4-1 7.500-9 6.500-15z" fill="#fff" stroke="#222" stroke-width=".9" stroke-dasharray="1.600 .8"/><g fill="none" stroke="#1a1a1a" stroke-width=".9"><path d="M1010 111c-3-2.500-8-1-8.500 3c-.4 3.500 3.500 5.500 6 4c3-2 2.500-6-.5-6.500c-3-.5-4.500 2-3.500 4c1 1.800 3.500 1.200 3.400-.6c-.1-1.400-1.800-1.400-1.900-.2"/><path d="M1001 110c2-2.500 6-3.500 9-1.500M1000.500 113c1.500 4 5 6 8 5"/></g><path d="M1016 110.7h5.200l-2.600 3.300z" fill="#1f3864"/><text x="1030.400" y="117.200" font-family="Liberation Serif,serif" font-weight="bold" font-size="16.500" fill="#2f55a8">A</text><path d="M1051.600 106.600h11.600v7h-1.200l-4.800 4.800l1-4.800h-6.600z" fill="#fff" stroke="#000" stroke-width="1.300"/><rect x="1074.600" y="106.700" width="11" height="10.700" fill="none" stroke="#0c0cd2" stroke-width="1.400"/><path d="M1101.500 106.500l5.800 11h-11.600z" fill="none" stroke="#0c0cd2" stroke-width="1.300"/><circle cx="1124" cy="112" r="6.400" fill="none" stroke="#0c0cd2" stroke-width="1.300"/><path d="M1138 114.500l10-9.500" stroke="#0c0cd2" stroke-width="1.200"/><path d="M1146 112l6.500 6.500m0-6.500l-6.500 6.500" stroke="#e81414" stroke-width="1.700"/><circle cx="1146.500" cy="118" r="1.400" fill="#e81414"/><path d="M1161 105.800l11.500 12m-.5-11.500l-10.500 11.500" stroke="#f0321e" stroke-width="1.800" stroke-linecap="round"/><rect x="1178.5" y="101.500" width="21" height="21" rx="2.500" fill="url(#gO)" stroke="#dcaa52"/><g transform="translate(1192.200 110.100) rotate(45) scale(1.1)"><path d="M-5.500 6.500v-6a5.500 5.500 0 0 1 11 0v6h-3.600v-6a1.900 1.900 0 0 0 -3.800 0v6z" fill="#e01e1e" stroke="#a01010" stroke-width=".6"/><rect x="-5.500" y="4" width="3.600" height="3" fill="#c8c8c8" stroke="#777" stroke-width=".5"/><rect x="1.900" y="4" width="3.600" height="3" fill="#c8c8c8" stroke="#777" stroke-width=".5"/><path d="M-3.800 .5a3.700 3.700 0 0 1 4-4" stroke="#ff9a9a" stroke-width="1" fill="none"/></g><rect x="1203" y="102" width="1" height="20" fill="#c9c9c9"/><rect x="1204" y="102" width="1.300" height="20" fill="#fdfdfd"/><g transform="translate(1213 104.5)"><rect x=".5" y=".5" width="14" height="13.500" fill="#fff" stroke="#8a9cc8"/><path d="M.500 4.800h14M.500 9.300h14M5.200 .500v13.500M9.800 .500v13.500" stroke="#b4c4e6" stroke-width="1"/><path d="M.500 14h14v-13.500" fill="none" stroke="#34466a" stroke-width="1.200"/></g><g transform="translate(1233 104)"><rect x=".5" y="5.500" width="11" height="10" fill="url(#gW)" stroke="#4a6aa0"/><path d="M2.500 9h2M2.500 12h2M6 9h4M6 12h4" stroke="#3a5a98" stroke-width="1.100"/><path d="M3.500 5.500l5-4.500l7 1v5l-5 2z" fill="#f2cf5a" stroke="#8a6a14" stroke-width=".7"/><path d="M5 5.500l4-3.500M6.500 6.500l4-3.500M8 7.500l4-3.500M4.500 4l5 3.500M6.500 2.500l5 3.500" stroke="#7a5a14" stroke-width=".5"/><rect x="14" y=".5" width="2" height="5.500" fill="#2aa84a"/></g><g transform="translate(1255 104)"><rect x="0" y="0" width="16" height="8" fill="#3a3a3a"/><text x=".5" y="6.500" font-family="Liberation Sans,sans-serif" font-size="5.500" fill="#d8d81e" textLength="15" lengthAdjust="spacingAndGlyphs">search</text><circle cx="7.500" cy="8.500" r="4.300" fill="#bfe8fa" stroke="#8a8a8a" stroke-width="1.500"/><path d="M10.800 11.800l4.200 4" stroke="#7a7a7a" stroke-width="2.200" stroke-linecap="round"/></g></svg><div id="sb" class="abs"><div class="abs th"></div><svg class="abs" style="left:0;top:0" width="13" height="668"><path d="M4.500 12l4-4.500l4 4.500z" fill="#505050"/><path d="M5 658l3.500 4.500l3.500-4.500z" fill="#a3a3a3"/></svg></div><div class="abs" style="left:8px;top:125px;width:1345px;height:588px;background:#74829e"></div><div id="chart" class="abs"><svg class="abs" style="left:0;top:0" width="1343" height="587" viewBox="9 125 1343 587" shape-rendering="crispEdges"><rect x="12" y="126" width="1259" height="2" fill="#9a9acb"/><rect x="12" y="411" width="1259" height="2" fill="#9a9acb"/><rect x="12" y="126" width="1" height="287" fill="#9a9acb"/><rect x="1269" y="126" width="2" height="287" fill="#9a9acb"/><path d="M13 127.5h4M13 131.5h2M13 135.5h4M13 139.5h2M13 143.5h4M13 147.5h2M13 151.5h4M13 155.5h2M13 159.5h4M13 163.5h2M13 167.5h4M13 171.5h2M13 175.5h4M13 179.5h2M13 183.5h4M13 187.5h2M13 191.5h4M13 195.5h2M13 199.5h4M13 203.5h2M13 207.5h4M13 211.5h2M13 215.5h4M13 219.5h2M13 223.5h4M13 227.5h2M13 231.5h4M13 235.5h2M13 239.5h4M13 243.5h2M13 247.5h4M13 251.5h2M13 255.5h4M13 259.5h2M13 263.5h4M13 267.5h2M13 271.5h4M13 275.5h2M13 279.5h4M13 283.5h2M13 287.5h4M13 291.5h2M13 295.5h4M13 299.5h2M13 303.5h4M13 307.5h2M13 311.5h4M13 315.5h2M13 319.5h4M13 323.5h2M13 327.5h4M13 331.5h2M13 335.5h4M13 339.5h2M13 343.5h4M13 347.5h2M13 351.5h4M13 355.5h2M13 359.5h4M13 363.5h2M13 367.5h4M13 371.5h2M13 375.5h4M13 379.5h2M13 383.5h4M13 387.5h2M13 391.5h4M13 395.5h2M13 399.5h4M13 403.5h2M13 407.5h4M1269 127.5h-4M1269 131.5h-2M1269 135.5h-4M1269 139.5h-2M1269 143.5h-4M1269 147.5h-2M1269 151.5h-4M1269 155.5h-2M1269 159.5h-4M1269 163.5h-2M1269 167.5h-4M1269 171.5h-2M1269 175.5h-4M1269 179.5h-2M1269 183.5h-4M1269 187.5h-2M1269 191.5h-4M1269 195.5h-2M1269 199.5h-4M1269 203.5h-2M1269 207.5h-4M1269 211.5h-2M1269 215.5h-4M1269 219.5h-2M1269 223.5h-4M1269 227.5h-2M1269 231.5h-4M1269 235.5h-2M1269 239.5h-4M1269 243.5h-2M1269 247.5h-4M1269 251.5h-2M1269 255.5h-4M1269 259.5h-2M1269 263.5h-4M1269 267.5h-2M1269 271.5h-4M1269 275.5h-2M1269 279.5h-4M1269 283.5h-2M1269 287.5h-4M1269 291.5h-2M1269 295.5h-4M1269 299.5h-2M1269 303.5h-4M1269 307.5h-2M1269 311.5h-4M1269 315.5h-2M1269 319.5h-4M1269 323.5h-2M1269 327.5h-4M1269 331.5h-2M1269 335.5h-4M1269 339.5h-2M1269 343.5h-4M1269 347.5h-2M1269 351.5h-4M1269 355.5h-2M1269 359.5h-4M1269 363.5h-2M1269 367.5h-4M1269 371.5h-2M1269 375.5h-4M1269 379.5h-2M1269 383.5h-4M1269 387.5h-2M1269 391.5h-4M1269 395.5h-2M1269 399.5h-4M1269 403.5h-2M1269 407.5h-4" stroke="#fff" stroke-width="1" fill="none"/><rect x="672" y="124.500" width="39" height="5.300" rx="1.500" fill="#cdcdcd" shape-rendering="auto"/><path d="M688 129l3.500-3l3.500 3z" fill="#777" shape-rendering="auto"/><rect x="9" y="416" width="1343" height="2" fill="#fff"/><rect x="9" y="418" width="1343" height="2" fill="#ffa500"/><rect x="9" y="418" width="2" height="294" fill="#ffa500"/><rect x="1350" y="418" width="2" height="294" fill="#ffa500"/><rect x="9" y="710" width="1343" height="2" fill="#ffa500"/><rect x="11" y="420" width="2" height="270" fill="#9a9acb"/><rect x="12" y="420" width="1258" height="1" fill="#9a9acb"/><rect x="1269" y="420" width="2" height="270" fill="#9a9acb"/><rect x="11" y="688" width="1260" height="2" fill="#9a9acb"/><path d="M12 422.5h5M12 426.5h3M12 430.5h5M12 434.5h3M12 438.5h5M12 442.5h3M12 446.5h5M12 450.5h3M12 454.5h5M12 458.5h3M12 462.5h5M12 466.5h3M12 470.5h5M12 474.5h3M12 478.5h5M12 482.5h3M12 486.5h5M12 490.5h3M12 494.5h5M12 498.5h3M12 502.5h5M12 506.5h3M12 510.5h5M12 514.5h3M12 518.5h5M12 522.5h3M12 526.5h5M12 530.5h3M12 534.5h5M12 538.5h3M12 542.5h5M12 546.5h3M12 550.5h5M12 554.5h3M12 558.5h5M12 562.5h3M12 566.5h5M12 570.5h3M12 574.5h5M12 578.5h3M12 582.5h5M12 586.5h3M12 590.5h5M12 594.5h3M12 598.5h5M12 602.5h3M12 606.5h5M12 610.5h3M12 614.5h5M12 618.5h3M12 622.5h5M12 626.5h3M12 630.5h5M12 634.5h3M12 638.5h5M12 642.5h3M12 646.5h5M12 650.5h3M12 654.5h5M12 658.5h3M12 662.5h5M12 666.5h3M12 670.5h5M12 674.5h3M12 678.5h5M12 682.5h3M12 686.5h5M1269 422.5h-4M1269 426.5h-2M1269 430.5h-4M1269 434.5h-2M1269 438.5h-4M1269 442.5h-2M1269 446.5h-4M1269 450.5h-2M1269 454.5h-4M1269 458.5h-2M1269 462.5h-4M1269 466.5h-2M1269 470.5h-4M1269 474.5h-2M1269 478.5h-4M1269 482.5h-2M1269 486.5h-4M1269 490.5h-2M1269 494.5h-4M1269 498.5h-2M1269 502.5h-4M1269 506.5h-2M1269 510.5h-4M1269 514.5h-2M1269 518.5h-4M1269 522.5h-2M1269 526.5h-4M1269 530.5h-2M1269 534.5h-4M1269 538.5h-2M1269 542.5h-4M1269 546.5h-2M1269 550.5h-4M1269 554.5h-2M1269 558.5h-4M1269 562.5h-2M1269 566.5h-4M1269 570.5h-2M1269 574.5h-4M1269 578.5h-2M1269 582.5h-4M1269 586.5h-2M1269 590.5h-4M1269 594.5h-2M1269 598.5h-4M1269 602.5h-2M1269 606.5h-4M1269 610.5h-2M1269 614.5h-4M1269 618.5h-2M1269 622.5h-4M1269 626.5h-2M1269 630.5h-4M1269 634.5h-2M1269 638.5h-4M1269 642.5h-2M1269 646.5h-4M1269 650.5h-2M1269 654.5h-4M1269 658.5h-2M1269 662.5h-4M1269 666.5h-2M1269 670.5h-4M1269 674.5h-2M1269 678.5h-4M1269 682.5h-2M1269 686.5h-4" stroke="#fff" stroke-width="1" fill="none"/><path d="M24.5 690v20M76.5 690v20M128.5 690v20M181.5 690v20M233.5 690v20M285.5 690v20M337.5 690v20M389.5 690v20M441.5 690v20M494.5 690v20M546.5 690v20M598.5 690v20M650.5 690v20M702.5 690v20M754.5 690v20M807.5 690v20M859.5 690v20M911.5 690v20M963.5 690v20M1015.5 690v20M1067.5 690v20M1120.5 690v20M1172.5 690v20M1224.5 690v20" stroke="#fff" stroke-width="1" fill="none"/><path d="M206.5 272v-4M207.5 272v-5M208.5 271v8M209.5 272v-6M210.5 272v-8M211.5 272v-6M212.5 272v-10M213.5 272v-1M214.5 272v-10M215.5 272v-13M216.5 272v-7M217.5 271v4M218.5 272v-3M219.5 272v-1M220.5 272v-3M221.5 272v-7M222.5 272v-4M223.5 272v-5M224.5 271v2M225.5 271v5M226.5 271v6M227.5 271v3M228.5 271v2M229.5 272v-4M230.5 272v-2M231.5 271v3M232.5 271v9M233.5 271v49M234.5 271v16M235.5 271v10M236.5 271v7M237.5 272v-1M238.5 271v4M239.5 271v5M240.5 271v15M241.5 271v4M242.5 271v10M243.5 271v15M244.5 271v23M245.5 271v4M246.5 271v2M247.5 272v-1M248.5 272v-6M249.5 272v-38M250.5 272v-13M251.5 272v-7M252.5 272v-6M253.5 271v5M254.5 271v8M255.5 272v-2M256.5 272v-2M257.5 272v-6M258.5 272v-24M259.5 272v-8M260.5 272v-5M261.5 272v-3M262.5 271v6M263.5 271v6M264.5 272v-4M265.5 271v3M266.5 271v5M267.5 272v-1M268.5 272v-12M269.5 272v-1M270.5 272v-1M271.5 272v-1M272.5 272v-6M273.5 272v-4M274.5 272v-1M275.5 271v2M276.5 271v3M277.5 272v-1M278.5 271v5M279.5 271v2M280.5 271v3M281.5 272v-1M282.5 272v-10M283.5 272v-7M284.5 272v-8M285.5 272v-32M286.5 272v-8M287.5 272v-7M288.5 272v-3M289.5 272v-7M290.5 272v-2M291.5 272v-4M292.5 272v-6M293.5 271v3M294.5 271v2M295.5 272v-10M296.5 272v-5M297.5 272v-3M298.5 272v-6M299.5 272v-2M300.5 272v-3M301.5 272v-1M302.5 272v-1M303.5 272v-2M304.5 272v-3M305.5 271v2M306.5 272v-3M307.5 272v-4M308.5 272v-2M309.5 271v3M310.5 271v4M311.5 272v-2M312.5 271v5M313.5 272v-2M314.5 272v-2M315.5 272v-2M316.5 272v-4M317.5 272v-6M318.5 272v-1M319.5 272v-6M320.5 271v15M321.5 272v-2M322.5 271v5M323.5 271v19M324.5 271v8M325.5 271v4M326.5 271v4M327.5 272v-3M328.5 272v-1M329.5 272v-2M330.5 271v5M331.5 272v-1M332.5 271v2M333.5 271v2M334.5 272v-5M335.5 272v-3M336.5 272v-1M337.5 271v4M338.5 271v7M339.5 271v6M340.5 271v4M341.5 272v-1M342.5 271v5M343.5 272v-14M344.5 271v6M345.5 271v6M346.5 271v7M347.5 271v3M348.5 271v4M349.5 271v8M350.5 271v11M351.5 271v9M352.5 271v3M353.5 272v-1M354.5 272v-4M355.5 272v-4M356.5 272v-5M357.5 272v-6M358.5 272v-9M359.5 271v2M360.5 271v4M361.5 272v-6M362.5 272v-38M363.5 272v-13M364.5 272v-10M365.5 272v-7M366.5 271v2M367.5 271v2M368.5 271v6M369.5 271v5M370.5 271v2M371.5 271v8M372.5 272v-1M373.5 272v-1M374.5 271v5M375.5 272v-1M376.5 272v-4M377.5 272v-7M378.5 272v-5M379.5 272v-3M380.5 272v-7M381.5 272v-7M382.5 272v-15M383.5 272v-7M384.5 272v-4M385.5 272v-18M386.5 272v-6M387.5 272v-4M388.5 272v-4M389.5 272v-2M390.5 272v-1M391.5 272v-4M392.5 272v-19M393.5 272v-8M394.5 272v-5M395.5 272v-2M396.5 272v-10M397.5 272v-4M398.5 272v-3M399.5 271v2M400.5 271v2M401.5 272v-1M402.5 271v2M403.5 272v-1M404.5 271v2M405.5 272v-1M406.5 272v-2M407.5 272v-2M408.5 272v-3M409.5 272v-2M410.5 272v-1M411.5 272v-1M412.5 272v-1M413.5 272v-2M414.5 272v-2M415.5 272v-1M416.5 272v-1M417.5 272v-1M418.5 271v2M419.5 271v2M420.5 272v-1M421.5 272v-1M422.5 272v-1M423.5 272v-1M424.5 271v2M425.5 271v2M426.5 271v2M427.5 271v4M428.5 271v2M429.5 271v2M430.5 272v-2M431.5 272v-1M432.5 272v-1M433.5 271v3M434.5 272v-10M435.5 271v3M436.5 271v4M437.5 271v4M438.5 271v2M439.5 271v2M440.5 272v-3M441.5 272v-5M442.5 271v2M443.5 271v6M444.5 271v2M445.5 271v5M446.5 271v4M447.5 271v3M448.5 272v-1M449.5 272v-1M450.5 272v-1M451.5 271v8M452.5 271v8M453.5 271v5M454.5 272v-3M455.5 272v-17M456.5 272v-5M457.5 272v-20M458.5 272v-5M459.5 272v-5M460.5 272v-2M461.5 271v3M462.5 271v3M463.5 271v2M464.5 272v-9M465.5 272v-2M466.5 272v-4M467.5 271v12M468.5 271v2M469.5 272v-5M470.5 272v-5M471.5 272v-5M472.5 272v-4M473.5 271v2M474.5 272v-1M475.5 272v-10M476.5 272v-6M477.5 272v-3M478.5 272v-3M479.5 272v-4M480.5 272v-6M481.5 272v-3M482.5 272v-5M483.5 272v-11M484.5 271v2M485.5 272v-1M486.5 271v2M487.5 272v-3M488.5 272v-5M489.5 272v-5M490.5 272v-3M491.5 272v-4M492.5 271v3M493.5 272v-3M494.5 271v3M495.5 271v6M496.5 271v4M497.5 271v3M498.5 271v2M499.5 271v9M500.5 271v9M501.5 271v2M502.5 271v3M503.5 272v-3M504.5 272v-1M505.5 271v3M506.5 271v2M507.5 272v-1M508.5 271v2M509.5 271v2M510.5 271v3M511.5 271v2M512.5 271v2M513.5 272v-1M514.5 271v5M515.5 271v6M516.5 271v6M517.5 271v2M518.5 272v-1M519.5 272v-1M520.5 271v4M521.5 271v3M522.5 271v2M523.5 272v-1M524.5 272v-5M525.5 272v-3M526.5 272v-5M527.5 272v-3M528.5 272v-2M529.5 272v-1M530.5 272v-3M531.5 271v4M532.5 271v2M533.5 272v-1M534.5 272v-8M535.5 272v-1M536.5 271v6M537.5 271v2M538.5 272v-1M539.5 272v-6M540.5 272v-4M541.5 272v-4M542.5 272v-3M543.5 272v-2M544.5 271v2M545.5 272v-2M546.5 272v-15M547.5 272v-6M548.5 272v-3M549.5 272v-2M550.5 272v-4M551.5 272v-2M552.5 271v4M553.5 271v9M554.5 271v5M555.5 271v13M556.5 271v6M557.5 271v2M558.5 272v-1M559.5 271v4M560.5 272v-1M561.5 271v2M562.5 272v-1M563.5 272v-4M564.5 272v-1M565.5 272v-1M566.5 271v4M567.5 271v8M568.5 271v3M569.5 272v-10M570.5 272v-5M571.5 272v-4M572.5 272v-1M573.5 271v9M574.5 271v3M575.5 272v-8M576.5 272v-1M577.5 271v2M578.5 271v2M579.5 271v2M580.5 272v-1M581.5 272v-1M582.5 272v-8M583.5 272v-2M584.5 272v-4M585.5 272v-3M586.5 272v-2M587.5 272v-6M588.5 271v3M589.5 272v-2M590.5 272v-2M591.5 272v-1M592.5 272v-1M593.5 271v7M594.5 271v37M595.5 271v11M596.5 271v11M597.5 271v4M598.5 272v-4M599.5 272v-1M600.5 272v-1M601.5 272v-3M602.5 272v-1M603.5 272v-10M604.5 272v-2M605.5 272v-1M606.5 272v-2M607.5 271v4M608.5 271v4M609.5 272v-1M610.5 272v-2M611.5 272v-10M612.5 272v-6M613.5 272v-4M614.5 272v-8M615.5 271v2M616.5 272v-2M617.5 272v-10M618.5 272v-2M619.5 272v-4M620.5 272v-2M621.5 271v5M622.5 271v2M623.5 271v4M624.5 271v3M625.5 271v4M626.5 271v12M627.5 272v-6M628.5 271v5M629.5 272v-3M630.5 272v-3M631.5 271v3M632.5 271v7M633.5 271v4M634.5 272v-1M635.5 272v-1M636.5 272v-4M637.5 272v-4M638.5 272v-14M639.5 272v-4M640.5 272v-3M641.5 272v-2M642.5 272v-1M643.5 272v-11M644.5 272v-1M645.5 272v-5M646.5 272v-5M647.5 272v-3M648.5 272v-1M649.5 272v-2M650.5 272v-2M651.5 272v-2M652.5 272v-1M653.5 271v2M654.5 271v3M655.5 271v2M656.5 271v2M657.5 272v-3M658.5 272v-8M659.5 271v4M660.5 271v4M661.5 271v4M662.5 271v7M663.5 271v2M664.5 271v5M665.5 271v13M666.5 271v5M667.5 271v8M668.5 271v7M669.5 271v2M670.5 271v8M671.5 271v6M672.5 272v-15M673.5 271v8M674.5 272v-3M675.5 271v2M676.5 272v-2M677.5 271v2M678.5 272v-1M679.5 271v2M680.5 271v6M681.5 272v-1M682.5 272v-1M683.5 272v-3M684.5 272v-3M685.5 272v-3M686.5 272v-5M687.5 272v-7M688.5 272v-4M689.5 272v-16M690.5 272v-7M691.5 271v5M692.5 271v10M693.5 271v16M694.5 272v-6M695.5 272v-4M696.5 272v-3M697.5 271v8M698.5 271v7M699.5 271v4M700.5 272v-3M701.5 272v-8M702.5 272v-18M703.5 271v23M704.5 271v8M705.5 271v7M706.5 271v4M707.5 272v-1M708.5 271v2M709.5 271v10M710.5 271v19M711.5 271v10M712.5 271v5M713.5 271v13M714.5 272v-38M715.5 272v-10M716.5 272v-8M717.5 271v19M718.5 271v39M719.5 271v11M720.5 271v21M721.5 272v-7M722.5 272v-28M723.5 271v12M724.5 272v-5M725.5 272v-4M726.5 272v-22M727.5 272v-6M728.5 272v-12M729.5 272v-16M730.5 272v-10M731.5 272v-2M732.5 271v10M733.5 272v-4M734.5 272v-2M735.5 272v-14M736.5 271v10M737.5 271v17M738.5 272v-14M739.5 271v6M740.5 271v10M741.5 271v11M742.5 271v3M743.5 272v-4M744.5 272v-8M745.5 272v-4M746.5 272v-4M747.5 272v-11M748.5 272v-1M749.5 271v6M750.5 272v-9M751.5 272v-47M752.5 272v-11M753.5 272v-12M754.5 272v-53M755.5 272v-20M756.5 272v-10M757.5 272v-8M758.5 271v7M759.5 272v-13M760.5 272v-6M761.5 272v-24M762.5 272v-11M763.5 272v-7M764.5 272v-18M765.5 272v-12M766.5 272v-8M767.5 272v-2M768.5 272v-14M769.5 272v-12M770.5 272v-20M771.5 272v-16M772.5 272v-7M773.5 271v5M774.5 271v3M775.5 272v-1M776.5 271v5M777.5 271v15M778.5 271v16M779.5 271v12M780.5 271v8M781.5 272v-6M782.5 272v-4M783.5 272v-29M784.5 272v-8M785.5 271v17M786.5 271v5M787.5 271v8M788.5 271v12M789.5 271v14M790.5 271v21M791.5 271v10M792.5 271v16M793.5 271v5M794.5 271v11M795.5 271v16M796.5 272v-6M797.5 272v-17M798.5 272v-5M799.5 272v-6M800.5 272v-3M801.5 271v11M802.5 272v-3M803.5 272v-5M804.5 272v-16M805.5 272v-9M806.5 272v-46M807.5 272v-12M808.5 272v-39M809.5 272v-15M810.5 272v-9M811.5 271v15M812.5 272v-20M813.5 272v-6M814.5 271v7M815.5 272v-4M816.5 272v-1M817.5 272v-11M818.5 272v-14M819.5 272v-29M820.5 272v-12M821.5 271v17M822.5 271v6M823.5 272v-7M824.5 272v-6M825.5 272v-1M826.5 271v15M827.5 271v17M828.5 272v-9M829.5 272v-5M830.5 272v-6M831.5 272v-28M832.5 272v-10M833.5 272v-19M834.5 272v-8M835.5 271v4M836.5 272v-9M837.5 272v-11M838.5 272v-1M839.5 271v5M840.5 272v-1M841.5 271v4M842.5 272v-1M843.5 272v-5M844.5 271v8M845.5 272v-6M846.5 272v-22M847.5 272v-8M848.5 271v8M849.5 272v-2M850.5 271v6M851.5 271v13M852.5 271v7M853.5 271v13M854.5 271v4M855.5 271v12M856.5 271v7M857.5 271v17M858.5 271v10M859.5 272v-30M860.5 272v-9M861.5 272v-5M862.5 272v-16M863.5 272v-31M864.5 272v-22M865.5 272v-11M866.5 272v-9M867.5 272v-14M868.5 272v-6M869.5 272v-5M870.5 271v2M871.5 271v9M872.5 272v-2M873.5 272v-8M874.5 272v-10M875.5 272v-4M876.5 272v-24M877.5 272v-24M878.5 272v-9M879.5 272v-66M880.5 272v-24M881.5 272v-11M882.5 272v-6M883.5 272v-4M884.5 271v2M885.5 271v5M886.5 271v8M887.5 271v10M888.5 271v35M889.5 271v37M890.5 271v55M891.5 271v20M892.5 271v16M893.5 272v-13M894.5 272v-13M895.5 272v-13M896.5 272v-13M897.5 271v3M898.5 271v16M899.5 272v-6M900.5 272v-40M901.5 272v-15M902.5 271v22M903.5 271v9M904.5 272v-7M905.5 272v-4M906.5 272v-10M907.5 272v-4M908.5 272v-9M909.5 271v5M910.5 271v23M911.5 271v9M912.5 271v5M913.5 272v-16M914.5 272v-66M915.5 272v-25M916.5 272v-13M917.5 272v-9M918.5 271v6M919.5 271v4M920.5 272v-1M921.5 271v4M922.5 271v10M923.5 271v2M924.5 271v3M925.5 272v-4M926.5 271v7M927.5 272v-1M928.5 272v-20M929.5 272v-26M930.5 272v-9M931.5 271v44M932.5 271v18M933.5 271v10M934.5 271v8M935.5 271v7M936.5 271v3M937.5 272v-9M938.5 272v-14M939.5 271v22M940.5 271v8M941.5 271v12M942.5 271v4M943.5 271v14M944.5 271v18M945.5 271v12M946.5 271v12M947.5 272v-11M948.5 271v7M949.5 271v4M950.5 271v10M951.5 271v5M952.5 271v22M953.5 271v9M954.5 272v-15M955.5 271v12M956.5 271v5M957.5 271v4M958.5 271v15M959.5 272v-5M960.5 271v6M961.5 272v-12M962.5 272v-8M963.5 272v-3M964.5 271v5M965.5 272v-8M966.5 271v7M967.5 271v6M968.5 271v10M969.5 271v3M970.5 272v-2M971.5 271v5M972.5 271v20M973.5 271v12M974.5 271v10M975.5 272v-16M976.5 271v14M977.5 271v13M978.5 272v-2M979.5 271v6M980.5 272v-1M981.5 272v-1M982.5 271v13M983.5 271v13M984.5 272v-17M985.5 271v14M986.5 271v10M987.5 271v10M988.5 271v5M989.5 271v19M990.5 271v7M991.5 271v15M992.5 271v4M993.5 271v12M994.5 271v9M995.5 272v-2M996.5 271v15M997.5 271v16M998.5 272v-14M999.5 271v3M1000.5 272v-10M1001.5 272v-3M1002.5 272v-20M1003.5 271v19M1004.5 271v14M1005.5 271v6M1006.5 271v5M1007.5 271v2M1008.5 272v-14M1009.5 272v-21M1010.5 272v-13M1011.5 272v-8M1012.5 272v-7M1013.5 271v13M1014.5 271v6M1015.5 271v18M1016.5 271v19M1017.5 271v19M1018.5 271v11M1019.5 272v-24M1020.5 272v-18M1021.5 272v-11M1022.5 272v-2M1023.5 272v-12M1024.5 272v-5M1025.5 272v-22M1026.5 271v10M1027.5 272v-6M1028.5 271v8M1029.5 272v-4M1030.5 271v19M1031.5 271v6M1032.5 271v12M1033.5 271v45M1034.5 271v39M1035.5 271v35M1036.5 271v13M1037.5 271v8M1038.5 271v15M1039.5 271v2M1040.5 271v14M1041.5 271v18M1042.5 271v4M1043.5 272v-5M1044.5 272v-22M1045.5 271v12M1046.5 272v-6M1047.5 271v15M1048.5 272v-1M1049.5 271v12M1050.5 272v-17M1051.5 272v-5M1052.5 272v-4M1053.5 272v-13M1054.5 272v-23M1055.5 271v9M1056.5 271v6M1057.5 272v-10M1058.5 272v-17M1059.5 272v-16M1060.5 272v-45M1061.5 272v-11M1062.5 271v17M1063.5 271v8M1064.5 272v-1M1065.5 272v-11M1066.5 271v4M1067.5 271v21M1068.5 271v29M1069.5 271v62M1070.5 271v24M1071.5 271v12M1072.5 271v10M1073.5 272v-51M1074.5 272v-14M1075.5 272v-13M1076.5 272v-8M1077.5 271v9M1078.5 272v-22M1079.5 272v-66M1080.5 272v-24M1081.5 272v-17M1082.5 271v15M1083.5 271v14M1084.5 271v6M1085.5 271v28M1086.5 272v-12M1087.5 272v-19M1088.5 271v4M1089.5 271v16M1090.5 271v14M1091.5 271v7M1092.5 271v23M1093.5 271v9M1094.5 272v-14M1095.5 272v-38M1096.5 272v-14M1097.5 272v-11M1098.5 271v48M1099.5 271v14M1100.5 271v52M1101.5 271v18M1102.5 271v25M1103.5 271v7M1104.5 271v7M1105.5 272v-9M1106.5 272v-37M1107.5 272v-14M1108.5 272v-16M1109.5 272v-13M1110.5 272v-29M1111.5 272v-10M1112.5 271v13M1113.5 272v-17M1114.5 272v-3M1115.5 272v-4M1116.5 272v-9M1117.5 272v-58M1118.5 272v-14M1119.5 272v-16M1120.5 271v8M1121.5 272v-9M1122.5 272v-12M1123.5 272v-35M1124.5 272v-15M1125.5 272v-47M1126.5 272v-21M1127.5 272v-17M1128.5 272v-12M1129.5 272v-39M1130.5 272v-16M1131.5 272v-11M1132.5 272v-10M1133.5 272v-17M1134.5 272v-4M1135.5 271v8M1136.5 272v-1M1137.5 271v12M1138.5 271v6M1139.5 271v28M1140.5 271v11M1141.5 271v7M1142.5 272v-4M1143.5 272v-14M1144.5 272v-46M1145.5 272v-14M1146.5 272v-12M1147.5 272v-7M1148.5 272v-7M1149.5 271v10M1150.5 271v5M1151.5 271v18M1152.5 271v15M1153.5 271v9M1154.5 271v7M1155.5 271v4M1156.5 272v-6M1157.5 272v-32M1158.5 272v-9M1159.5 272v-7M1160.5 272v-10M1161.5 272v-5M1162.5 272v-12M1163.5 272v-15M1164.5 272v-3M1165.5 272v-12M1166.5 272v-30M1167.5 272v-17M1168.5 272v-6M1169.5 272v-3M1170.5 272v-6M1171.5 272v-23M1172.5 272v-7M1173.5 272v-14M1174.5 272v-11M1175.5 271v2M1176.5 271v10M1177.5 271v19M1178.5 271v47M1179.5 271v20M1180.5 271v15M1181.5 272v-32M1182.5 272v-11M1183.5 272v-10M1184.5 271v32M1185.5 272v-11M1186.5 272v-14M1187.5 272v-22M1188.5 272v-6M1189.5 271v8M1190.5 271v4M1191.5 271v9M1192.5 271v28M1193.5 271v11M1194.5 271v29M1195.5 271v13M1196.5 272v-42M1197.5 272v-11M1198.5 272v-18M1199.5 271v15M1200.5 271v23M1201.5 271v4M1202.5 272v-11M1203.5 272v-4M1204.5 272v-8M1205.5 271v20M1206.5 271v10M1207.5 271v11M1208.5 272v-16M1209.5 271v29M1210.5 271v18M1211.5 272v-16M1212.5 271v10M1213.5 272v-5M1214.5 272v-11M1215.5 272v-4M1216.5 271v3M1217.5 271v3M1218.5 271v6M1219.5 271v25M1220.5 271v30M1221.5 271v13M1222.5 271v8M1223.5 271v8M1224.5 271v14M1225.5 271v6M1226.5 271v6M1227.5 271v19M1228.5 271v12M1229.5 271v5M1230.5 272v-5M1231.5 271v4M1232.5 271v21M1233.5 272v-19M1234.5 272v-12M1235.5 272v-16M1236.5 272v-12M1237.5 272v-9M1238.5 272v-9M1239.5 272v-8M1240.5 272v-9M1241.5 272v-10M1242.5 271v6M1243.5 271v19M1244.5 271v55M1245.5 271v20M1246.5 271v12M1247.5 271v16M1248.5 271v9M1249.5 272v-7M1250.5 272v-30M1251.5 271v13M1252.5 272v-9M1253.5 271v18M1254.5 271v18M1255.5 271v8M1256.5 271v12M1257.5 271v2M1258.5 272v-3M1259.5 271v13M1260.5 272v-14M1261.5 272v-5M1262.5 272v-3M1263.5 271v3M1264.5 272v-7M1265.5 271v22M1266.5 271v36" stroke="#aefcff" stroke-width="1" fill="none"/><rect x="206" y="271" width="1061" height="1" fill="#aefcff"/><polyline shape-rendering="auto" fill="none" stroke="#00ee10" stroke-width="1.25" stroke-linejoin="round" points="206,606.0 207,605.8 208,605.2 209,603.7 210,602.5 211,602.6 212,602.4 213,602.3 214,601.0 215,600.6 216,601.0 217,600.8 218,601.3 219,601.1 220,600.7 221,600.7 222,601.9 223,600.8 224,600.7 225,600.7 226,601.4 227,601.7 228,601.7 229,602.0 230,602.3 231,602.7 232,604.8 233,606.4 234,607.6 235,608.7 236,608.0 237,608.6 238,608.2 239,608.9 240,608.7 241,609.1 242,610.3 243,608.9 244,609.2 245,608.3 246,608.7 247,609.1 248,605.8 249,603.1 250,600.0 251,599.2 252,599.4 253,598.5 254,599.1 255,597.8 256,597.7 257,596.9 258,596.7 259,595.5 260,595.6 261,594.8 262,595.2 263,594.8 264,594.4 265,593.9 266,594.3 267,594.2 268,594.7 269,593.9 270,594.4 271,594.4 272,594.3 273,594.8 274,595.2 275,595.4 276,595.7 277,596.5 278,597.2 279,597.2 280,596.6 281,596.2 282,595.7 283,595.3 284,594.3 285,592.5 286,590.9 287,588.6 288,587.8 289,588.1 290,586.8 291,586.4 292,586.1 293,585.0 294,586.2 295,585.6 296,584.7 297,584.7 298,584.2 299,583.6 300,583.7 301,583.6 302,583.9 303,583.6 304,583.3 305,583.7 306,582.8 307,583.3 308,583.6 309,583.2 310,582.8 311,583.3 312,583.9 313,584.2 314,585.0 315,584.3 316,585.0 317,585.6 318,585.7 319,585.2 320,587.0 321,588.2 322,588.2 323,588.1 324,588.8 325,589.4 326,590.7 327,590.3 328,590.5 329,591.4 330,591.1 331,592.2 332,591.5 333,591.9 334,592.7 335,593.3 336,593.3 337,593.4 338,592.8 339,593.6 340,593.9 341,594.2 342,594.9 343,594.4 344,594.5 345,593.8 346,593.2 347,593.0 348,592.9 349,592.8 350,592.1 351,591.9 352,591.5 353,592.6 354,592.6 355,591.9 356,591.8 357,591.5 358,592.1 359,592.1 360,592.9 361,591.4 362,588.5 363,585.8 364,587.0 365,586.2 366,585.1 367,585.4 368,584.4 369,586.2 370,585.1 371,584.8 372,584.3 373,583.4 374,584.0 375,583.3 376,584.1 377,582.9 378,583.3 379,584.1 380,584.2 381,582.9 382,582.7 383,583.5 384,583.4 385,582.4 386,582.0 387,581.4 388,580.7 389,580.3 390,580.5 391,579.4 392,579.1 393,577.4 394,576.6 395,575.4 396,575.7 397,575.2 398,574.9 399,575.8 400,576.1 401,575.8 402,575.9 403,575.5 404,575.0 405,575.3 406,575.1 407,574.8 408,574.6 409,574.7 410,575.3 411,575.4 412,575.2 413,576.0 414,575.5 415,575.7 416,576.0 417,575.2 418,574.8 419,575.9 420,575.3 421,576.1 422,575.7 423,576.0 424,575.9 425,574.7 426,575.8 427,575.2 428,575.2 429,575.3 430,575.8 431,575.8 432,575.8 433,574.8 434,575.2 435,574.4 436,575.4 437,575.7 438,575.2 439,575.6 440,575.7 441,576.0 442,575.3 443,575.3 444,575.4 445,576.4 446,576.2 447,575.7 448,575.9 449,575.9 450,576.0 451,575.8 452,575.8 453,575.5 454,575.3 455,575.4 456,574.1 457,573.1 458,572.1 459,572.2 460,572.3 461,571.9 462,572.3 463,572.3 464,571.9 465,571.9 466,572.2 467,572.6 468,573.8 469,572.9 470,574.1 471,574.4 472,574.4 473,574.7 474,575.1 475,574.7 476,574.7 477,574.5 478,574.7 479,575.0 480,574.4 481,573.9 482,573.7 483,573.6 484,573.4 485,574.2 486,573.9 487,573.8 488,574.7 489,574.0 490,574.8 491,575.0 492,574.2 493,574.4 494,574.8 495,575.8 496,576.2 497,575.4 498,576.5 499,576.1 500,576.4 501,576.4 502,576.6 503,576.1 504,576.6 505,576.6 506,577.4 507,578.1 508,578.5 509,577.4 510,576.9 511,577.5 512,577.4 513,578.7 514,578.2 515,577.8 516,578.6 517,578.5 518,577.7 519,578.3 520,578.5 521,578.7 522,578.8 523,578.7 524,579.0 525,578.8 526,578.7 527,579.8 528,579.4 529,579.5 530,578.8 531,579.4 532,579.9 533,579.1 534,579.9 535,579.2 536,579.5 537,579.2 538,579.2 539,579.6 540,578.8 541,579.3 542,578.0 543,577.6 544,577.9 545,576.9 546,576.8 547,577.0 548,577.3 549,576.4 550,577.5 551,578.3 552,578.2 553,577.9 554,577.9 555,578.1 556,577.9 557,578.4 558,578.5 559,578.6 560,579.1 561,578.5 562,577.9 563,578.9 564,578.0 565,578.1 566,578.2 567,578.1 568,577.7 569,578.0 570,578.9 571,577.7 572,577.8 573,578.2 574,578.0 575,577.9 576,577.9 577,576.7 578,577.0 579,577.3 580,577.4 581,577.7 582,577.4 583,577.1 584,577.2 585,577.1 586,577.3 587,577.5 588,577.1 589,576.9 590,576.9 591,577.6 592,577.7 593,577.6 594,578.5 595,579.6 596,580.4 597,580.5 598,579.6 599,579.7 600,579.3 601,579.6 602,578.9 603,578.9 604,578.9 605,579.0 606,578.0 607,577.7 608,578.2 609,577.3 610,577.7 611,577.1 612,577.1 613,576.2 614,577.1 615,576.4 616,576.0 617,577.0 618,576.3 619,577.4 620,576.2 621,576.0 622,576.2 623,576.9 624,576.2 625,576.5 626,576.5 627,576.0 628,576.5 629,576.3 630,576.0 631,576.8 632,576.6 633,576.3 634,575.9 635,575.3 636,576.3 637,576.0 638,575.3 639,575.8 640,575.2 641,575.7 642,575.8 643,575.8 644,575.7 645,575.6 646,575.1 647,575.3 648,575.2 649,575.3 650,575.5 651,575.5 652,575.9 653,574.2 654,575.5 655,575.3 656,576.4 657,576.0 658,575.1 659,576.0 660,575.8 661,576.6 662,576.0 663,576.5 664,576.7 665,576.9 666,576.9 667,576.6 668,577.6 669,577.6 670,576.9 671,576.2 672,576.4 673,576.3 674,575.7 675,575.5 676,575.9 677,574.7 678,574.8 679,574.1 680,574.4 681,574.2 682,574.0 683,574.1 684,575.4 685,574.8 686,575.0 687,576.2 688,575.5 689,575.1 690,576.2 691,575.9 692,577.2 693,576.4 694,576.9 695,576.8 696,577.8 697,577.6 698,578.3 699,578.5 700,578.5 701,580.1 702,580.5 703,580.1 704,579.7 705,580.0 706,581.5 707,583.8 708,581.8 709,581.8 710,581.9 711,581.6 712,581.7 713,582.3 714,583.7 715,583.0 716,584.0 717,584.6 718,588.1 719,589.8 720,590.7 721,591.2 722,591.0 723,590.9 724,590.2 725,589.6 726,588.8 727,589.5 728,589.7 729,591.9 730,589.5 731,590.0 732,591.2 733,589.7 734,590.6 735,588.2 736,587.1 737,586.1 738,584.6 739,584.3 740,586.5 741,584.8 742,584.3 743,584.2 744,583.5 745,583.4 746,581.9 747,581.4 748,582.0 749,579.5 750,576.8 751,575.8 752,573.5 753,572.8 754,570.0 755,568.1 756,567.2 757,567.7 758,565.2 759,564.3 760,563.0 761,562.5 762,562.3 763,561.9 764,558.6 765,560.6 766,559.0 767,558.3 768,560.2 769,557.7 770,559.1 771,557.8 772,555.8 773,556.8 774,556.8 775,555.7 776,553.6 777,555.0 778,554.8 779,553.8 780,555.7 781,553.4 782,552.8 783,552.3 784,551.4 785,550.8 786,551.1 787,550.8 788,549.7 789,549.6 790,548.0 791,549.4 792,549.0 793,550.5 794,550.2 795,551.2 796,552.4 797,551.4 798,553.8 799,550.9 800,550.2 801,548.9 802,550.4 803,549.7 804,548.3 805,546.4 806,545.3 807,543.1 808,539.4 809,536.6 810,534.5 811,534.4 812,534.5 813,533.5 814,533.5 815,535.4 816,533.9 817,530.8 818,531.4 819,530.5 820,529.7 821,531.5 822,531.1 823,531.9 824,532.7 825,533.7 826,535.7 827,536.1 828,535.1 829,536.6 830,535.5 831,536.0 832,534.7 833,534.8 834,533.6 835,531.6 836,533.5 837,533.2 838,533.2 839,531.5 840,532.6 841,531.8 842,531.7 843,532.5 844,532.4 845,531.2 846,529.0 847,526.9 848,527.6 849,528.1 850,526.8 851,525.1 852,526.5 853,527.7 854,528.9 855,528.3 856,527.5 857,527.2 858,525.9 859,525.0 860,523.4 861,521.3 862,520.9 863,519.4 864,518.9 865,519.4 866,518.4 867,517.7 868,516.7 869,515.1 870,515.9 871,516.1 872,514.3 873,515.9 874,514.1 875,514.3 876,513.0 877,510.1 878,510.8 879,506.0 880,505.7 881,503.8 882,503.9 883,502.3 884,501.8 885,502.1 886,502.2 887,503.0 888,507.0 889,510.6 890,512.0 891,514.0 892,512.1 893,512.7 894,512.0 895,512.0 896,511.0 897,509.4 898,510.7 899,508.8 900,510.1 901,510.9 902,511.0 903,510.9 904,513.3 905,513.3 906,512.9 907,514.6 908,516.9 909,516.3 910,517.5 911,518.0 912,517.7 913,517.4 914,515.3 915,513.5 916,512.8 917,511.3 918,514.3 919,514.1 920,514.5 921,514.9 922,513.6 923,513.5 924,514.4 925,515.6 926,512.8 927,514.1 928,513.8 929,514.9 930,515.7 931,515.3 932,515.6 933,517.8 934,518.6 935,518.6 936,521.8 937,521.6 938,523.7 939,523.0 940,526.1 941,525.0 942,528.2 943,526.8 944,530.0 945,529.0 946,528.6 947,530.2 948,531.2 949,530.6 950,531.6 951,532.7 952,532.7 953,530.7 954,533.3 955,534.4 956,534.7 957,535.6 958,534.6 959,537.7 960,536.6 961,536.4 962,537.0 963,536.8 964,535.9 965,535.2 966,536.5 967,536.3 968,534.6 969,535.6 970,537.3 971,537.3 972,537.7 973,537.4 974,536.5 975,537.1 976,534.7 977,534.4 978,534.4 979,534.2 980,533.8 981,533.9 982,531.7 983,532.6 984,531.5 985,529.7 986,529.9 987,531.4 988,530.0 989,528.6 990,526.7 991,527.8 992,527.5 993,527.9 994,529.5 995,527.9 996,527.3 997,526.0 998,525.5 999,526.1 1000,525.6 1001,528.3 1002,525.2 1003,525.0 1004,527.0 1005,526.5 1006,525.8 1007,528.4 1008,527.4 1009,527.0 1010,528.8 1011,529.4 1012,529.1 1013,530.4 1014,530.9 1015,529.9 1016,529.3 1017,529.4 1018,531.7 1019,533.3 1020,533.5 1021,533.0 1022,532.3 1023,529.6 1024,529.4 1025,526.3 1026,527.3 1027,526.2 1028,526.1 1029,527.3 1030,528.3 1031,530.8 1032,533.6 1033,536.2 1034,541.0 1035,543.2 1036,543.7 1037,542.4 1038,543.3 1039,542.6 1040,542.8 1041,541.7 1042,541.0 1043,540.8 1044,541.1 1045,540.7 1046,538.2 1047,538.3 1048,537.4 1049,536.2 1050,533.7 1051,534.5 1052,532.3 1053,533.1 1054,531.8 1055,530.6 1056,526.8 1057,528.5 1058,527.6 1059,524.9 1060,525.8 1061,524.1 1062,523.9 1063,523.6 1064,523.4 1065,524.0 1066,527.0 1067,524.7 1068,527.9 1069,530.4 1070,533.4 1071,536.4 1072,536.4 1073,536.5 1074,534.3 1075,534.2 1076,531.3 1077,530.9 1078,528.0 1079,526.7 1080,524.3 1081,524.1 1082,526.9 1083,526.5 1084,527.8 1085,528.2 1086,530.2 1087,530.7 1088,532.3 1089,533.4 1090,533.5 1091,534.0 1092,536.6 1093,535.4 1094,533.6 1095,530.6 1096,530.7 1097,532.1 1098,534.7 1099,537.6 1100,539.7 1101,542.3 1102,545.0 1103,545.9 1104,547.2 1105,547.1 1106,545.2 1107,541.4 1108,540.7 1109,540.0 1110,538.7 1111,539.4 1112,538.7 1113,540.9 1114,542.0 1115,540.7 1116,539.1 1117,536.9 1118,536.8 1119,535.1 1120,533.3 1121,533.9 1122,531.4 1123,528.7 1124,524.2 1125,523.2 1126,521.4 1127,517.7 1128,517.3 1129,515.6 1130,513.1 1131,511.0 1132,510.5 1133,511.3 1134,510.9 1135,510.7 1136,510.6 1137,510.9 1138,512.0 1139,512.0 1140,515.4 1141,517.7 1142,516.1 1143,515.9 1144,516.5 1145,516.0 1146,514.3 1147,514.6 1148,514.2 1149,516.7 1150,514.3 1151,515.5 1152,516.3 1153,516.2 1154,515.4 1155,515.2 1156,512.3 1157,512.6 1158,511.8 1159,511.8 1160,513.8 1161,509.7 1162,511.1 1163,509.1 1164,510.9 1165,510.4 1166,508.0 1167,509.3 1168,506.8 1169,507.0 1170,505.3 1171,503.7 1172,503.0 1173,502.4 1174,502.2 1175,500.9 1176,504.0 1177,504.3 1178,506.6 1179,506.1 1180,504.6 1181,502.7 1182,502.0 1183,503.0 1184,502.9 1185,503.4 1186,504.5 1187,505.7 1188,506.0 1189,506.8 1190,506.2 1191,507.1 1192,507.2 1193,508.4 1194,508.4 1195,507.9 1196,506.3 1197,504.7 1198,503.5 1199,502.4 1200,504.3 1201,503.2 1202,502.9 1203,504.2 1204,503.5 1205,503.8 1206,505.1 1207,503.8 1208,502.7 1209,505.9 1210,506.8 1211,504.7 1212,505.6 1213,507.1 1214,505.1 1215,506.5 1216,508.1 1217,510.9 1218,511.3 1219,515.5 1220,516.4 1221,518.4 1222,518.4 1223,517.5 1224,519.7 1225,519.3 1226,521.0 1227,520.6 1228,521.4 1229,521.9 1230,523.1 1231,523.4 1232,522.3 1233,522.9 1234,523.3 1235,521.7 1236,519.9 1237,519.9 1238,519.3 1239,519.9 1240,519.2 1241,521.6 1242,525.3 1243,524.2 1244,526.2 1245,527.3 1246,528.2 1247,529.6 1248,528.5 1249,529.0 1250,525.3 1251,525.7 1252,527.1 1253,526.2 1254,525.5 1255,525.2 1256,524.4 1257,524.3 1258,524.2 1259,524.8 1260,523.9 1261,524.7 1262,526.4 1263,524.8 1264,525.8 1265,527.4"/><polyline shape-rendering="auto" fill="none" stroke="#e9a2ee" stroke-width="1.3" stroke-linejoin="round" points="219,602.6 220,602.2 221,601.9 222,601.6 223,601.4 224,601.3 225,601.2 226,601.1 227,601.0 228,601.1 229,601.2 230,601.3 231,601.4 232,601.7 233,602.0 234,602.5 235,603.1 236,603.5 237,604.1 238,604.6 239,605.2 240,605.7 241,606.2 242,606.9 243,607.4 244,607.9 245,608.3 246,608.5 247,608.7 248,608.6 249,608.2 250,607.6 251,607.0 252,606.3 253,605.6 254,604.9 255,604.1 256,603.2 257,602.4 258,601.5 259,600.5 260,599.6 261,598.6 262,597.8 263,597.2 264,596.8 265,596.4 266,596.1 267,595.8 268,595.5 269,595.2 270,594.9 271,594.8 272,594.6 273,594.5 274,594.5 275,594.6 276,594.6 277,594.7 278,594.9 279,595.2 280,595.3 281,595.5 282,595.5 283,595.6 284,595.6 285,595.5 286,595.2 287,594.8 288,594.3 289,593.8 290,593.1 291,592.4 292,591.6 293,590.7 294,590.0 295,589.2 296,588.4 297,587.7 298,587.0 299,586.3 300,585.8 301,585.5 302,585.2 303,584.9 304,584.6 305,584.4 306,584.2 307,584.1 308,583.9 309,583.7 310,583.6 311,583.5 312,583.5 313,583.5 314,583.6 315,583.6 316,583.7 317,583.9 318,584.0 319,584.1 320,584.4 321,584.8 322,585.1 323,585.5 324,585.9 325,586.3 326,586.8 327,587.3 328,587.6 329,588.2 330,588.6 331,589.1 332,589.5 333,590.0 334,590.4 335,590.7 336,591.1 337,591.5 338,591.7 339,592.0 340,592.3 341,592.5 342,592.9 343,593.1 344,593.3 345,593.4 346,593.6 347,593.6 348,593.7 349,593.6 350,593.5 351,593.4 352,593.3 353,593.3 354,593.2 355,593.0 356,592.8 357,592.6 358,592.4 359,592.3 360,592.3 361,592.1 362,591.8 363,591.3 364,591.0 365,590.6 366,590.1 367,589.6 368,589.0 369,588.6 370,588.1 371,587.6 372,587.1 373,586.5 374,585.8 375,585.3 376,584.9 377,584.7 378,584.5 379,584.3 380,584.3 381,584.1 382,584.0 383,583.8 384,583.6 385,583.5 386,583.3 387,583.2 388,582.9 389,582.7 390,582.5 391,582.2 392,581.9 393,581.4 394,580.9 395,580.4 396,579.9 397,579.3 398,578.6 399,578.2 400,577.8 401,577.4 402,577.0 403,576.7 404,576.3 405,576.0 406,575.7 407,575.5 408,575.4 409,575.3 410,575.3 411,575.3 412,575.3 413,575.3 414,575.3 415,575.3 416,575.3 417,575.3 418,575.2 419,575.3 420,575.3 421,575.4 422,575.5 423,575.6 424,575.6 425,575.6 426,575.6 427,575.5 428,575.5 429,575.5 430,575.5 431,575.5 432,575.6 433,575.5 434,575.5 435,575.4 436,575.4 437,575.4 438,575.3 439,575.4 440,575.4 441,575.4 442,575.4 443,575.4 444,575.4 445,575.4 446,575.5 447,575.5 448,575.6 449,575.7 450,575.7 451,575.7 452,575.8 453,575.8 454,575.8 455,575.7 456,575.6 457,575.5 458,575.2 459,574.9 460,574.7 461,574.4 462,574.1 463,573.9 464,573.6 465,573.3 466,573.0 467,572.8 468,572.7 469,572.5 470,572.5 471,572.6 472,572.8 473,573.0 474,573.2 475,573.4 476,573.5 477,573.7 478,573.9 479,574.1 480,574.3 481,574.4 482,574.4 483,574.4 484,574.4 485,574.4 486,574.3 487,574.3 488,574.2 489,574.2 490,574.2 491,574.2 492,574.2 493,574.1 494,574.2 495,574.3 496,574.5 497,574.6 498,574.8 499,575.0 500,575.1 501,575.3 502,575.5 503,575.6 504,575.8 505,575.9 506,576.1 507,576.4 508,576.6 509,576.7 510,576.8 511,576.9 512,577.0 513,577.2 514,577.3 515,577.4 516,577.6 517,577.7 518,577.8 519,577.9 520,578.0 521,578.1 522,578.1 523,578.2 524,578.3 525,578.4 526,578.5 527,578.6 528,578.7 529,578.8 530,578.8 531,578.9 532,579.0 533,579.1 534,579.2 535,579.2 536,579.3 537,579.3 538,579.3 539,579.4 540,579.4 541,579.3 542,579.2 543,579.1 544,579.0 545,578.9 546,578.6 547,578.5 548,578.3 549,578.1 550,578.0 551,577.9 552,577.8 553,577.7 554,577.6 555,577.6 556,577.5 557,577.6 558,577.6 559,577.8 560,577.9 561,578.0 562,578.1 563,578.3 564,578.3 565,578.3 566,578.3 567,578.3 568,578.3 569,578.3 570,578.3 571,578.3 572,578.2 573,578.2 574,578.1 575,578.1 576,578.1 577,577.9 578,577.9 579,577.8 580,577.7 581,577.7 582,577.7 583,577.6 584,577.5 585,577.5 586,577.4 587,577.4 588,577.3 589,577.3 590,577.2 591,577.2 592,577.3 593,577.3 594,577.4 595,577.5 596,577.7 597,578.0 598,578.1 599,578.3 600,578.5 601,578.6 602,578.8 603,578.9 604,579.0 605,579.1 606,579.2 607,579.2 608,579.2 609,579.0 610,578.8 611,578.6 612,578.4 613,578.1 614,578.0 615,577.8 616,577.6 617,577.4 618,577.2 619,577.1 620,577.0 621,576.9 622,576.7 623,576.7 624,576.6 625,576.5 626,576.5 627,576.5 628,576.4 629,576.4 630,576.4 631,576.4 632,576.4 633,576.4 634,576.3 635,576.3 636,576.3 637,576.2 638,576.2 639,576.1 640,576.0 641,576.0 642,575.9 643,575.9 644,575.9 645,575.8 646,575.7 647,575.6 648,575.6 649,575.6 650,575.5 651,575.5 652,575.5 653,575.4 654,575.4 655,575.4 656,575.5 657,575.5 658,575.4 659,575.5 660,575.5 661,575.6 662,575.7 663,575.7 664,575.8 665,575.9 666,576.0 667,576.2 668,576.3 669,576.5 670,576.5 671,576.5 672,576.6 673,576.6 674,576.6 675,576.6 676,576.6 677,576.4 678,576.3 679,576.1 680,575.9 681,575.7 682,575.5 683,575.2 684,575.1 685,575.0 686,574.9 687,574.9 688,574.9 689,574.9 690,574.9 691,575.0 692,575.2 693,575.3 694,575.5 695,575.7 696,575.9 697,576.2 698,576.4 699,576.7 700,576.9 701,577.2 702,577.5 703,577.9 704,578.2 705,578.4 706,578.7 707,579.3 708,579.6 709,580.0 710,580.3 711,580.6 712,580.8 713,581.1 714,581.5 715,581.7 716,581.9 717,582.2 718,582.8 719,583.5 720,584.2 721,584.7 722,585.4 723,586.0 724,586.6 725,587.2 726,587.7 727,588.2 728,588.7 729,589.3 730,589.7 731,590.1 732,590.3 733,590.3 734,590.3 735,590.1 736,589.8 737,589.4 738,589.0 739,588.7 740,588.5 741,588.2 742,587.8 743,587.2 744,586.8 745,586.3 746,585.7 747,585.1 748,584.5 749,583.8 750,583.1 751,582.4 752,581.6 753,580.8 754,579.6 755,578.4 756,577.2 757,576.0 758,574.7 759,573.3 760,572.0 761,570.6 762,569.2 763,567.9 764,566.6 765,565.5 766,564.5 767,563.5 768,562.8 769,562.0 770,561.4 771,560.7 772,560.1 773,559.5 774,559.1 775,558.6 776,558.0 777,557.5 778,557.2 779,556.7 780,556.5 781,556.2 782,555.6 783,555.2 784,554.7 785,554.2 786,553.9 787,553.4 788,552.9 789,552.5 790,552.1 791,551.7 792,551.3 793,551.0 794,550.6 795,550.5 796,550.5 797,550.4 798,550.6 799,550.6 800,550.5 801,550.4 802,550.4 803,550.4 804,550.4 805,550.2 806,550.0 807,549.4 808,548.7 809,547.6 810,546.3 811,545.1 812,543.8 813,542.5 814,541.3 815,540.4 816,539.2 817,537.8 818,536.6 819,535.5 820,534.4 821,533.5 822,533.0 823,532.6 824,532.5 825,532.4 826,532.5 827,532.7 828,532.8 829,532.9 830,533.0 831,533.4 832,533.6 833,533.9 834,534.2 835,534.2 836,534.4 837,534.5 838,534.5 839,534.4 840,534.1 841,533.8 842,533.6 843,533.3 844,533.1 845,532.7 846,532.3 847,531.8 848,531.3 849,531.1 850,530.6 851,530.0 852,529.6 853,529.3 854,529.0 855,528.8 856,528.5 857,528.1 858,527.6 859,527.2 860,526.8 861,526.4 862,525.9 863,525.3 864,524.7 865,524.3 866,523.7 867,523.0 868,522.1 869,521.2 870,520.4 871,519.6 872,518.8 873,518.1 874,517.4 875,516.9 876,516.4 877,515.7 878,515.1 879,514.2 880,513.3 881,512.3 882,511.4 883,510.4 884,509.4 885,508.4 886,507.6 887,506.6 888,506.1 889,505.9 890,505.8 891,506.1 892,506.2 893,506.7 894,507.1 895,507.7 896,508.2 897,508.7 898,509.3 899,509.8 900,510.4 901,511.0 902,511.2 903,511.3 904,511.3 905,511.3 906,511.4 907,511.5 908,511.8 909,512.2 910,512.6 911,513.2 912,513.7 913,514.4 914,514.7 915,514.9 916,515.0 917,515.1 918,515.1 919,515.2 920,515.3 921,515.3 922,515.1 923,514.9 924,514.7 925,514.5 926,514.1 927,513.9 928,513.8 929,513.9 930,514.1 931,514.4 932,514.5 933,514.8 934,515.1 935,515.3 936,515.9 937,516.5 938,517.1 939,517.7 940,518.6 941,519.4 942,520.4 943,521.3 944,522.3 945,523.3 946,524.2 947,525.1 948,526.0 949,526.8 950,527.5 951,528.3 952,529.0 953,529.5 954,530.0 955,530.7 956,531.2 957,531.8 958,532.1 959,532.8 960,533.3 961,533.8 962,534.2 963,534.6 964,534.9 965,535.1 966,535.4 967,535.8 968,535.9 969,536.0 970,536.2 971,536.3 972,536.5 973,536.5 974,536.5 975,536.5 976,536.4 977,536.2 978,536.1 979,536.0 980,535.8 981,535.6 982,535.4 983,535.2 984,534.8 985,534.2 986,533.7 987,533.3 988,532.8 989,532.2 990,531.6 991,531.2 992,530.7 993,530.2 994,529.9 995,529.5 996,529.2 997,528.7 998,528.3 999,528.0 1000,527.7 1001,527.5 1002,527.1 1003,526.9 1004,526.9 1005,526.8 1006,526.7 1007,526.7 1008,526.6 1009,526.5 1010,526.6 1011,526.9 1012,527.1 1013,527.4 1014,527.8 1015,527.9 1016,528.2 1017,528.5 1018,528.9 1019,529.3 1020,529.9 1021,530.2 1022,530.6 1023,530.8 1024,530.8 1025,530.6 1026,530.4 1027,530.1 1028,529.8 1029,529.6 1030,529.5 1031,529.6 1032,529.8 1033,530.0 1034,530.5 1035,531.3 1036,532.1 1037,533.0 1038,534.0 1039,535.1 1040,536.2 1041,537.4 1042,538.4 1043,539.4 1044,540.3 1045,541.0 1046,541.3 1047,541.5 1048,541.2 1049,540.7 1050,540.0 1051,539.4 1052,538.7 1053,538.0 1054,537.2 1055,536.4 1056,535.4 1057,534.5 1058,533.5 1059,532.4 1060,531.5 1061,530.5 1062,529.6 1063,528.7 1064,527.9 1065,527.2 1066,526.8 1067,526.2 1068,525.9 1069,525.9 1070,526.4 1071,526.9 1072,527.6 1073,528.4 1074,529.0 1075,529.7 1076,530.2 1077,530.8 1078,531.1 1079,531.3 1080,531.1 1081,531.1 1082,531.0 1083,530.7 1084,530.3 1085,529.7 1086,529.3 1087,528.9 1088,528.7 1089,528.7 1090,528.8 1091,529.0 1092,529.7 1093,530.3 1094,530.9 1095,531.4 1096,531.7 1097,532.1 1098,532.6 1099,533.2 1100,533.9 1101,534.8 1102,535.7 1103,536.5 1104,537.5 1105,538.5 1106,539.1 1107,539.5 1108,540.0 1109,540.7 1110,541.2 1111,541.8 1112,542.1 1113,542.3 1114,542.5 1115,542.3 1116,541.9 1117,541.3 1118,540.5 1119,539.7 1120,538.8 1121,538.3 1122,537.6 1123,536.8 1124,535.8 1125,534.6 1126,533.4 1127,531.7 1128,530.0 1129,528.2 1130,526.3 1131,524.5 1132,522.6 1133,520.9 1134,519.3 1135,517.6 1136,516.2 1137,514.9 1138,514.0 1139,513.2 1140,512.8 1141,512.8 1142,512.7 1143,512.7 1144,513.0 1145,513.3 1146,513.6 1147,513.8 1148,514.1 1149,514.5 1150,514.7 1151,515.1 1152,515.4 1153,515.7 1154,515.7 1155,515.5 1156,515.2 1157,515.0 1158,514.7 1159,514.4 1160,514.3 1161,514.0 1162,513.8 1163,513.2 1164,513.0 1165,512.6 1166,512.0 1167,511.5 1168,510.9 1169,510.3 1170,509.8 1171,509.2 1172,508.6 1173,507.9 1174,507.1 1175,506.4 1176,505.9 1177,505.6 1178,505.3 1179,505.0 1180,504.7 1181,504.3 1182,503.9 1183,503.6 1184,503.5 1185,503.4 1186,503.5 1187,503.8 1188,504.1 1189,504.5 1190,504.6 1191,504.8 1192,504.9 1193,505.0 1194,505.3 1195,505.7 1196,506.0 1197,506.1 1198,506.1 1199,506.1 1200,506.1 1201,505.9 1202,505.7 1203,505.5 1204,505.3 1205,505.0 1206,504.9 1207,504.6 1208,504.2 1209,504.0 1210,504.1 1211,504.1 1212,504.2 1213,504.5 1214,504.6 1215,504.8 1216,505.2 1217,505.7 1218,506.2 1219,507.1 1220,507.9 1221,508.9 1222,510.1 1223,510.9 1224,511.8 1225,512.8 1226,513.9 1227,514.9 1228,516.1 1229,517.2 1230,518.2 1231,519.1 1232,519.9 1233,520.5 1234,520.9 1235,521.2 1236,521.3 1237,521.5 1238,521.4 1239,521.5 1240,521.3 1241,521.4 1242,521.7 1243,521.8 1244,522.1 1245,522.4 1246,522.8 1247,523.3 1248,523.6 1249,524.1 1250,524.5 1251,524.9 1252,525.5 1253,526.0 1254,526.4 1255,526.7 1256,526.6 1257,526.6 1258,526.5 1259,526.3 1260,526.0 1261,525.6 1262,525.5 1263,525.2 1264,525.2 1265,525.3"/><rect x="739" y="127" width="1" height="289" fill="#f02424"/><rect x="739" y="420" width="1" height="269" fill="#f02424"/></svg><div class="lbl yr" style="left:1266px;top:3px">17000.00</div><div class="lbl yr" style="left:1266px;top:19px">15000.00</div><div class="lbl yr" style="left:1266px;top:35px">13000.00</div><div class="lbl yr" style="left:1266px;top:51px">11000.00</div><div class="lbl yr" style="left:1266px;top:67px">9000.00</div><div class="lbl yr" style="left:1266px;top:83px">7000.00</div><div class="lbl yr" style="left:1266px;top:99px">5000.00</div><div class="lbl yr" style="left:1266px;top:115px">3000.00</div><div class="lbl yr" style="left:1266px;top:131px">1000.00</div><div class="lbl yr" style="left:1266px;top:147px;letter-spacing:-0.19px">-1000.00</div><div class="lbl yr" style="left:1266px;top:163px;letter-spacing:-0.19px">-3000.00</div><div class="lbl yr" style="left:1266px;top:179px;letter-spacing:-0.19px">-5000.00</div><div class="lbl yr" style="left:1266px;top:195px;letter-spacing:-0.19px">-7000.00</div><div class="lbl yr" style="left:1266px;top:211px;letter-spacing:-0.19px">-9000.00</div><div class="lbl yr" style="left:1266px;top:227px;letter-spacing:-0.19px">-11000.00</div><div class="lbl yr" style="left:1266px;top:243px;letter-spacing:-0.19px">-13000.00</div><div class="lbl yr" style="left:1266px;top:259px;letter-spacing:-0.19px">-15000.00</div><div class="lbl yr" style="left:1262px;top:161px;width:64px;height:13px;line-height:13px;background:#ffff00;color:#14140a;padding-left:4.5px;letter-spacing:-0.25px">-2661.11</div><div class="lbl yr" style="left:1266px;top:298px">220000.00</div><div class="lbl yr" style="left:1266px;top:314px">200000.00</div><div class="lbl yr" style="left:1266px;top:330px">180000.00</div><div class="lbl yr" style="left:1266px;top:346px">160000.00</div><div class="lbl yr" style="left:1266px;top:362px">140000.00</div><div class="lbl yr" style="left:1266px;top:378px">120000.00</div><div class="lbl yr" style="left:1266px;top:394px">100000.00</div><div class="lbl yr" style="left:1266px;top:410px">80000.00</div><div class="lbl yr" style="left:1266px;top:426px">60000.00</div><div class="lbl yr" style="left:1266px;top:442px">40000.00</div><div class="lbl yr" style="left:1266px;top:458px">20000.00</div><div class="lbl yr" style="left:1266px;top:474px">0.00</div><div class="lbl yr" style="left:1266px;top:490px;letter-spacing:-0.19px">-20000.00</div><div class="lbl yr" style="left:1266px;top:506px;letter-spacing:-0.19px">-40000.00</div><div class="lbl yr" style="left:1266px;top:522px;letter-spacing:-0.19px">-60000.00</div><div class="lbl yr" style="left:1266px;top:538px;letter-spacing:-0.19px">-80000.00</div><div class="lbl yr" style="left:17.5px;top:567px">1991</div><div class="lbl yr" style="left:69.5px;top:567px">1992</div><div class="lbl yr" style="left:121.5px;top:567px">1993</div><div class="lbl yr" style="left:174.5px;top:567px">1994</div><div class="lbl yr" style="left:226.5px;top:567px">1995</div><div class="lbl yr" style="left:278.5px;top:567px">1996</div><div class="lbl yr" style="left:330.5px;top:567px">1997</div><div class="lbl yr" style="left:382.5px;top:567px">1998</div><div class="lbl yr" style="left:434.5px;top:567px">1999</div><div class="lbl yr" style="left:487.5px;top:567px">2000</div><div class="lbl yr" style="left:539.5px;top:567px">2001</div><div class="lbl yr" style="left:591.5px;top:567px">2002</div><div class="lbl yr" style="left:643.5px;top:567px">2003</div><div class="lbl yr" style="left:695.5px;top:567px">2004</div><div class="lbl yr" style="left:747.5px;top:567px">2005</div><div class="lbl yr" style="left:800.5px;top:567px">2006</div><div class="lbl yr" style="left:852.5px;top:567px">2007</div><div class="lbl yr" style="left:904.5px;top:567px">2008</div><div class="lbl yr" style="left:956.5px;top:567px">2009</div><div class="lbl yr" style="left:1008.5px;top:567px">2010</div><div class="lbl yr" style="left:1060.5px;top:567px">2011</div><div class="lbl yr" style="left:1113.5px;top:567px">2012</div><div class="lbl yr" style="left:1165.5px;top:567px">2013</div><div class="lbl yr" style="left:1217.5px;top:567px">2014</div><div class="lbl" style="left:1284px;top:567px;color:#ffd700;letter-spacing:0.25px">Week</div><div class="lbl" id="t1" style="left:512px;top:6px;font:13px 'DejaVu Sans','Liberation Sans',sans-serif;line-height:16px;color:#ffd700;letter-spacing:0.23px">SET Foreign Net (M. Baht) (SETVFN)</div><div class="lbl" id="t2" style="left:566px;top:296px;color:#ffa510;letter-spacing:-0.13px">Advance/Decline Line</div><div class="lbl" style="left:8px;top:272px;font-size:12.3px;color:#ffd700;letter-spacing:-0.15px">No Gaps</div><div class="lbl" style="left:8px;top:549px;font-size:12.3px;color:#ffd700;letter-spacing:-0.15px">No Gaps</div><div class="box" style="left:12px;top:12px;width:116px;height:44px"><div id="b1a" style="left:4px;top:5px;color:#a8f4f4;letter-spacing:-0.14px">Close = 428.69</div><span class="tri" style="left:103px;top:11px"></span><div id="b1b" style="left:21px;top:22px;color:#fff">20/09/2004</div></div><div class="box" style="left:12px;top:305px;width:148px;height:61px"><div id="b2a" style="left:4px;top:5px;color:#00f000">A/D = 25651.82</div><span class="tri" style="left:109px;top:11px"></span><div id="b2b" style="left:4px;top:22px;color:#f0a0f0">Avg(14) = 22489.33</div><span class="tri" style="left:135px;top:28px"></span><div id="b2c" style="left:37px;top:39px;color:#fff">20/09/2004</div></div></div><div id="task" class="abs"><svg class="abs" style="left:0;top:0" width="1366" height="10" viewBox="0 727 1366 10"><path d="M11 737.500l27-4v4z" fill="#fff"/><rect x="66" y="732" width="30" height="6" fill="#0a8a0a"/><path d="M76 737q3-3 6 0" stroke="#fff" stroke-width="1.2" fill="none"/><rect x="113.500" y="728.500" width="58" height="10" fill="#b27a7e" stroke="#c9a3a5"/><ellipse cx="143" cy="738" rx="11" ry="6" fill="#3a8fdc"/><path d="M133 736q8-8 22-1" stroke="#f3c12c" stroke-width="2" fill="none"/><rect x="191" y="734" width="20" height="4" fill="#e8d9a0"/><rect x="192" y="734" width="3" height="3" fill="#3aa03a"/><rect x="251" y="731" width="32" height="7" fill="#fff"/><ellipse cx="266" cy="738" rx="9" ry="5" fill="#d8cc3a"/><rect x="299.500" y="728.500" width="54" height="10" fill="#b88a8d" stroke="#d9c0c1"/><rect x="355.500" y="728.500" width="3" height="10" fill="#b88a8d" stroke="#d9c0c1"/><ellipse cx="326" cy="739" rx="10" ry="6" fill="#e23030"/><rect x="362.500" y="728.500" width="58" height="10" fill="#a86a6e" stroke="#b98a8d"/><rect x="375" y="732" width="32" height="6" fill="#fff"/><rect x="377" y="734" width="28" height="4" fill="#1d2b44"/></svg><div class="abs" style="left:1310.5px;top:5px;font:12px 'Liberation Sans',sans-serif;color:#fff;white-space:nowrap">14:07</div></div></body></html>
